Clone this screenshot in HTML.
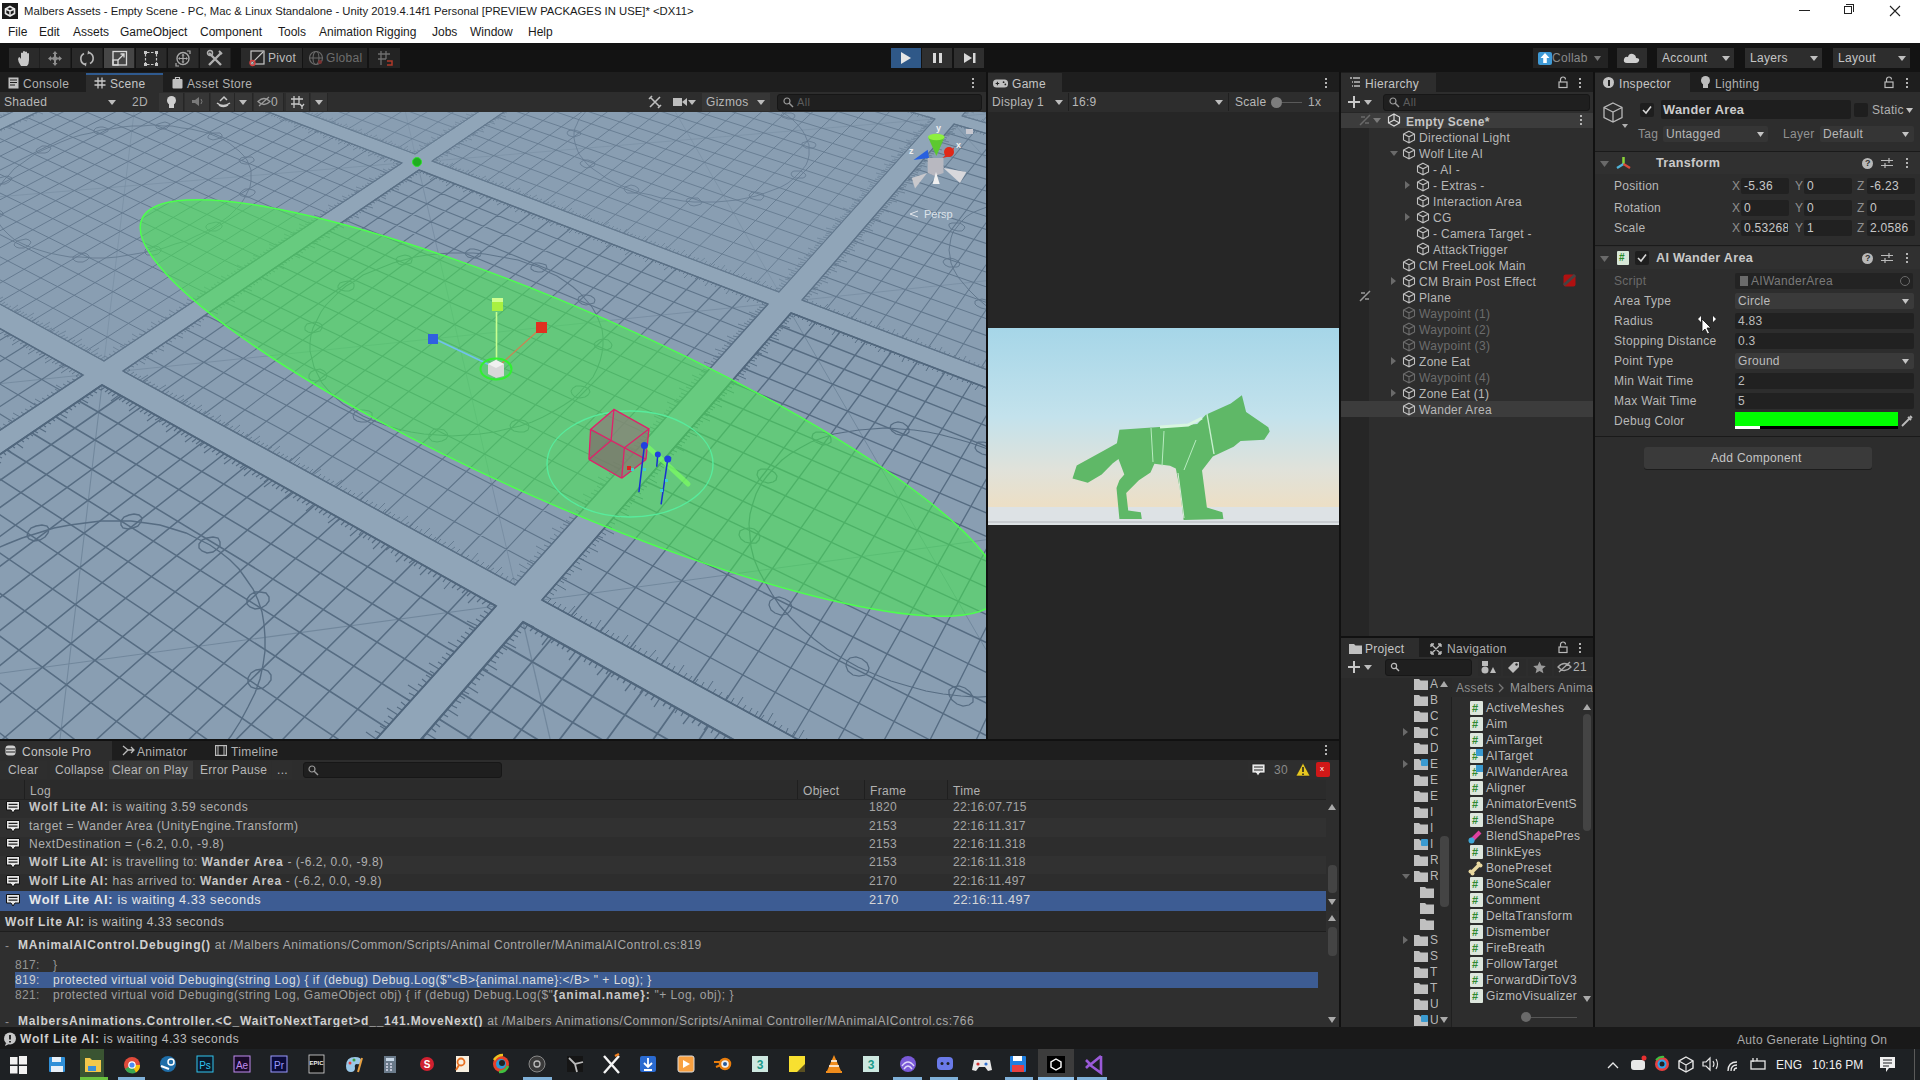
<!DOCTYPE html>
<html><head><meta charset="utf-8"><style>*{margin:0;padding:0;box-sizing:border-box}
html,body{width:1920px;height:1080px;overflow:hidden;background:#191919;font-family:"Liberation Sans",sans-serif;font-size:12px;color:#c4c4c4;position:relative}
.a{position:absolute}
.t{position:absolute;white-space:nowrap;line-height:1;letter-spacing:0.3px}
b{font-weight:bold}
svg.a{overflow:visible}</style></head><body>
<div class="a" style="left:0px;top:0px;width:1920px;height:43px;background:#ffffff;"></div><div class="a" style="left:2px;top:3px;width:16px;height:16px;background:#1a1a1a"></div><svg class="a" style="left:2px;top:3px" width="16" height="16" viewBox="0 0 16 16"><path d="M8 3.5 L12.5 6 L12.5 10.5 L8 13 L3.5 10.5 L3.5 6Z" fill="none" stroke="#e8e8e8" stroke-width="1.6"/><path d="M8 8 L8 13 M8 8 L12.5 6 M8 8 L3.5 6" stroke="#e8e8e8" stroke-width="1.4"/></svg><div class="t" style="left:24px;top:5.6px;font-size:11.3px;color:#1a1a1a;letter-spacing:0">Malbers Assets - Empty Scene - PC, Mac &amp; Linux Standalone - Unity 2019.4.14f1 Personal [PREVIEW PACKAGES IN USE]* &lt;DX11&gt;</div><div class="a" style="left:1799px;top:10px;width:11px;height:1px;background:#222;"></div><div class="a" style="left:1844px;top:6px;width:8px;height:8px;border:1px solid #222"></div><div class="a" style="left:1846px;top:4px;width:8px;height:8px;border-top:1px solid #222;border-right:1px solid #222"></div><svg class="a" style="left:1889px;top:5px" width="12" height="12"><path d="M1 1L11 11M11 1L1 11" stroke="#222" stroke-width="1.1"/></svg><div class="t" style="left:8px;top:26.2px;font-size:12px;color:#1a1a1a;letter-spacing:0">File</div><div class="t" style="left:39px;top:26.2px;font-size:12px;color:#1a1a1a;letter-spacing:0">Edit</div><div class="t" style="left:73px;top:26.2px;font-size:12px;color:#1a1a1a;letter-spacing:0">Assets</div><div class="t" style="left:120px;top:26.2px;font-size:12px;color:#1a1a1a;letter-spacing:0">GameObject</div><div class="t" style="left:200px;top:26.2px;font-size:12px;color:#1a1a1a;letter-spacing:0">Component</div><div class="t" style="left:278px;top:26.2px;font-size:12px;color:#1a1a1a;letter-spacing:0">Tools</div><div class="t" style="left:319px;top:26.2px;font-size:12px;color:#1a1a1a;letter-spacing:0">Animation Rigging</div><div class="t" style="left:432px;top:26.2px;font-size:12px;color:#1a1a1a;letter-spacing:0">Jobs</div><div class="t" style="left:470px;top:26.2px;font-size:12px;color:#1a1a1a;letter-spacing:0">Window</div><div class="t" style="left:528px;top:26.2px;font-size:12px;color:#1a1a1a;letter-spacing:0">Help</div><div class="a" style="left:0px;top:43px;width:1920px;height:29px;background:#131313;"></div><div class="a" style="left:9px;top:48px;width:31px;height:20px;background:#2a2a2a;border-right:1px solid #1f1f1f"></div><div class="a" style="left:40px;top:48px;width:31px;height:20px;background:#2a2a2a;border-right:1px solid #1f1f1f"></div><div class="a" style="left:72px;top:48px;width:31px;height:20px;background:#2a2a2a;border-right:1px solid #1f1f1f"></div><div class="a" style="left:104px;top:48px;width:31px;height:20px;background:#464646;border-right:1px solid #1f1f1f"></div><div class="a" style="left:136px;top:48px;width:31px;height:20px;background:#2a2a2a;border-right:1px solid #1f1f1f"></div><div class="a" style="left:168px;top:48px;width:31px;height:20px;background:#2a2a2a;border-right:1px solid #1f1f1f"></div><div class="a" style="left:200px;top:48px;width:31px;height:20px;background:#2a2a2a;border-right:1px solid #1f1f1f"></div><div class="a" style="left:241px;top:48px;width:61px;height:20px;background:#2a2a2a;"></div><div class="a" style="left:303px;top:48px;width:64px;height:20px;background:#232323;"></div><div class="a" style="left:369px;top:48px;width:31px;height:20px;background:#232323;"></div><svg class="a" style="left:17px;top:50px" width="16" height="17" viewBox="0 0 16 17"><path d="M4 16 Q1 12 1 9 L2 7 Q3 7 4 9 L4 3 Q5 2 6 3 L6 8 L6 1.5 Q7 0.5 8 1.5 L8 8 L8 2 Q9 1 10 2 L10 8 L10 3.5 Q11 2.5 12 3.5 L12 10 Q12 14 10 16Z" fill="#c8c8c8"/></svg><svg class="a" style="left:47px;top:50px" width="16" height="17" viewBox="0 0 16 17"><path d="M8 1L10.5 4H5.5ZM8 16L5.5 13H10.5ZM1 8.5L4 6V11ZM15 8.5L12 11V6Z" fill="#8e8e8e"/><path d="M8 3V14M3 8.5H13" stroke="#8e8e8e" stroke-width="2"/><circle cx="8" cy="8.5" r="2.2" fill="#8e8e8e"/></svg><svg class="a" style="left:79px;top:50px" width="16" height="17" viewBox="0 0 16 17"><path d="M6 14.5A6 6 0 0 1 5 3.5M10 2.5A6 6 0 0 1 11 13.5" stroke="#b8b8b8" stroke-width="1.6" fill="none"/><path d="M9 0.5L11.5 3L8.5 4.5ZM7 16.5L4.5 14L7.5 12.5Z" fill="#b8b8b8"/></svg><svg class="a" style="left:112px;top:50px" width="16" height="17" viewBox="0 0 16 17"><rect x="1" y="1.5" width="13.5" height="13.5" fill="none" stroke="#dadada" stroke-width="1.3"/><rect x="1" y="10" width="5" height="5" fill="none" stroke="#dadada" stroke-width="1.3"/><path d="M6 10L12 4M8.5 4H12V7.5" stroke="#dadada" stroke-width="1.3" fill="none"/></svg><svg class="a" style="left:143px;top:50px" width="16" height="17" viewBox="0 0 16 17"><path d="M4 2.5H12M4 14.5H12M2.5 4V13M13.5 4V13" stroke="#c8c8c8" stroke-width="1.2" stroke-dasharray="2.5 1.5"/><rect x="1" y="1" width="3" height="3" fill="#c8c8c8"/><rect x="12" y="1" width="3" height="3" fill="#c8c8c8"/><rect x="1" y="13" width="3" height="3" fill="#c8c8c8"/><rect x="12" y="13" width="3" height="3" fill="#c8c8c8"/></svg><svg class="a" style="left:175px;top:50px" width="16" height="17" viewBox="0 0 16 17"><circle cx="8" cy="8.5" r="6" fill="none" stroke="#a8a8a8" stroke-width="1.4"/><path d="M8 3.5L9.5 5.5H6.5ZM8 13.5L6.5 11.5H9.5ZM3 8.5L5 7V10ZM13 8.5L11 10V7Z" fill="#a8a8a8"/><path d="M8 5V12M4.5 8.5H11.5" stroke="#a8a8a8" stroke-width="1.2"/><path d="M12 1L15 1L15 4M1 13L1 16L4 16" stroke="#a8a8a8" stroke-width="1.2" fill="none"/></svg><svg class="a" style="left:207px;top:50px" width="16" height="17" viewBox="0 0 16 17"><path d="M2 15L14 3M2 3L14 15" stroke="#b0b0b0" stroke-width="2.4"/><circle cx="3" cy="3" r="2.5" fill="none" stroke="#b0b0b0" stroke-width="1.5"/><path d="M12 1L15 4" stroke="#b0b0b0" stroke-width="2"/></svg><svg class="a" style="left:249px;top:50px" width="16" height="16" viewBox="0 0 16 16"><rect x="2" y="1" width="13" height="13" fill="none" stroke="#c8c8c8" stroke-width="1.2"/><path d="M3 13L14 2" stroke="#c8c8c8" stroke-width="1.2"/><circle cx="3.5" cy="13" r="2.5" fill="none" stroke="#d84040" stroke-width="1.4"/></svg><svg class="a" style="left:308px;top:50px" width="16" height="16" viewBox="0 0 16 16"><circle cx="8" cy="8" r="6.5" fill="none" stroke="#6a6a6a" stroke-width="1.2"/><ellipse cx="8" cy="8" rx="3" ry="6.5" fill="none" stroke="#6a6a6a" stroke-width="1.1"/><path d="M1.5 8H14.5" stroke="#6a6a6a"/><circle cx="12" cy="12" r="2" fill="#7a3030"/></svg><svg class="a" style="left:377px;top:50px" width="16" height="16" viewBox="0 0 16 16"><path d="M4 1V15M9 1V9M1 4H13M1 9H9" stroke="#6e6e6e" stroke-width="1.3"/><path d="M10 11H15V15H10" stroke="#b03a2a" stroke-width="1.5" fill="none"/></svg><div class="t" style="left:268px;top:52.2px;font-size:12px;color:#bcbcbc;">Pivot</div><div class="t" style="left:326px;top:52.2px;font-size:12px;color:#6e6e6e;">Global</div><div class="a" style="left:891px;top:48px;width:30px;height:20px;background:#2f5888;"></div><div class="a" style="left:922px;top:48px;width:30px;height:20px;background:#2f2f2f;"></div><div class="a" style="left:954px;top:48px;width:30px;height:20px;background:#2f2f2f;"></div><svg class="a" style="left:900px;top:52px" width="12" height="12"><path d="M1 0L11 6L1 12Z" fill="#e6e6e6"/></svg><div class="a" style="left:933px;top:53px;width:3px;height:10px;background:#d8d8d8;"></div><div class="a" style="left:939px;top:53px;width:3px;height:10px;background:#d8d8d8;"></div><svg class="a" style="left:964px;top:52px" width="12" height="12"><path d="M0 1L8 6L0 11Z" fill="#d8d8d8"/><rect x="9" y="1" width="2.5" height="10" fill="#d8d8d8"/></svg><div class="a" style="left:1533px;top:48px;width:75px;height:20px;background:#232323;"></div><div class="t" style="left:1552px;top:52.2px;font-size:12px;color:#8a8a8a;">Collab</div><svg class="a" style="left:1594px;top:56px" width="7" height="5"><path d="M0 0L7 0L3.5 5Z" fill="#777"/></svg><svg class="a" style="left:1538px;top:50px" width="14" height="15"><rect x="0" y="2" width="14" height="13" rx="2" fill="#3f9ad6"/><path d="M7 3L11.5 8H8.8V13H5.2V8H2.5Z" fill="#fff"/></svg><div class="a" style="left:1617px;top:48px;width:30px;height:20px;background:#2d2d2d;"></div><svg class="a" style="left:1623px;top:51px" width="18" height="14"><path d="M4 12 Q0 12 1 8 Q2 5 5 6 Q6 2 10 3 Q13 4 13 7 Q17 7 16 10 Q15 12 13 12Z" fill="#d0d0d0"/></svg><div class="a" style="left:1657px;top:48px;width:77px;height:20px;background:#2d2d2d;"></div><div class="t" style="left:1662px;top:52.2px;font-size:12px;color:#c5c5c5;">Account</div><svg class="a" style="left:1722px;top:56px" width="8" height="5"><path d="M0 0L8 0L4 5Z" fill="#c0c0c0"/></svg><div class="a" style="left:1745px;top:48px;width:77px;height:20px;background:#2d2d2d;"></div><div class="t" style="left:1750px;top:52.2px;font-size:12px;color:#c5c5c5;">Layers</div><svg class="a" style="left:1810px;top:56px" width="8" height="5"><path d="M0 0L8 0L4 5Z" fill="#c0c0c0"/></svg><div class="a" style="left:1833px;top:48px;width:77px;height:20px;background:#2d2d2d;"></div><div class="t" style="left:1838px;top:52.2px;font-size:12px;color:#c5c5c5;">Layout</div><svg class="a" style="left:1898px;top:56px" width="8" height="5"><path d="M0 0L8 0L4 5Z" fill="#c0c0c0"/></svg><div class="a" style="left:0px;top:72px;width:986px;height:20px;background:#1e1e1e;"></div><div class="a" style="left:0px;top:73px;width:84px;height:19px;background:#1e1e1e;"></div><div class="t" style="left:23px;top:78.2px;font-size:12px;color:#b1b1b1;">Console</div><svg class="a" style="left:8px;top:77px" width="11" height="12"><rect x="0.5" y="0.5" width="10" height="11" fill="#c0c0c0"/><path d="M2 3h7M2 5.5h7M2 8h5" stroke="#1e1e1e" stroke-width="1.1"/></svg><div class="a" style="left:86px;top:73px;width:77px;height:19px;background:#2d2d2d;"></div><div class="a" style="left:86px;top:73px;width:77px;height:2px;background:#2f5a8f;"></div><div class="t" style="left:110px;top:78.2px;font-size:12px;color:#c5c5c5;">Scene</div><svg class="a" style="left:94px;top:77px" width="12" height="12"><path d="M4 0.5v11M8 0.5v11M0.5 4h11M0.5 8h11" stroke="#c8c8c8" stroke-width="1.3"/></svg><div class="a" style="left:165px;top:73px;width:95px;height:19px;background:#1e1e1e;"></div><div class="t" style="left:187px;top:78.2px;font-size:12px;color:#b1b1b1;">Asset Store</div><svg class="a" style="left:172px;top:76px" width="11" height="13"><path d="M3.5 3V1.5h4V3" stroke="#c0c0c0" fill="none" stroke-width="1.2"/><rect x="0.5" y="3" width="10" height="9.5" rx="1" fill="#c0c0c0"/></svg><div class="a" style="left:972px;top:78px;width:2px;height:2px;background:#b4b4b4;"></div><div class="a" style="left:972px;top:82px;width:2px;height:2px;background:#b4b4b4;"></div><div class="a" style="left:972px;top:86px;width:2px;height:2px;background:#b4b4b4;"></div><div class="a" style="left:0px;top:92px;width:986px;height:20px;background:#2d2d2d;"></div><div class="a" style="left:0px;top:93px;width:121px;height:18px;background:#2d2d2d;"></div><div class="t" style="left:4px;top:96.2px;font-size:12px;color:#b8b8b8;">Shaded</div><svg class="a" style="left:108px;top:100px" width="8" height="5"><path d="M0 0L8 0L4.0 5Z" fill="#bdbdbd"/></svg><div class="a" style="left:127px;top:93px;width:25px;height:18px;background:#2d2d2d;"></div><div class="t" style="left:132px;top:96.2px;font-size:12px;color:#afafaf;">2D</div><div class="a" style="left:159px;top:93px;width:25px;height:18px;background:#363636;border-right:1px solid #262626"></div><div class="a" style="left:185px;top:93px;width:25px;height:18px;background:#363636;border-right:1px solid #262626"></div><div class="a" style="left:211px;top:93px;width:24px;height:18px;background:#363636;border-right:1px solid #262626"></div><div class="a" style="left:235px;top:93px;width:18px;height:18px;background:#363636;border-right:1px solid #262626"></div><div class="a" style="left:254px;top:93px;width:30px;height:18px;background:#363636;border-right:1px solid #262626"></div><div class="a" style="left:286px;top:93px;width:24px;height:18px;background:#363636;border-right:1px solid #262626"></div><div class="a" style="left:311px;top:93px;width:17px;height:18px;background:#363636;border-right:1px solid #262626"></div><svg class="a" style="left:239px;top:100px" width="8" height="5"><path d="M0 0L8 0L4.0 5Z" fill="#bdbdbd"/></svg><svg class="a" style="left:315px;top:100px" width="8" height="5"><path d="M0 0L8 0L4.0 5Z" fill="#bdbdbd"/></svg><div class="t" style="left:271px;top:96.2px;font-size:12px;color:#afafaf;">0</div><div class="a" style="left:167px;top:96px;width:9px;height:9px;border-radius:50%;background:#cfcfcf"></div><div class="a" style="left:169px;top:104px;width:5px;height:4px;background:#cfcfcf"></div><svg class="a" style="left:191px;top:96px" width="14" height="11"><path d="M1 4h3l4-3v9l-4-3H1z" fill="#7a7a7a"/><path d="M10 3q2 2.5 0 5" stroke="#7a7a7a" fill="none"/></svg><svg class="a" style="left:216px;top:95px" width="15" height="13"><path d="M1 8q6 5 13 0M3 10q5 3 9 0M4 6l4-4 3 3" stroke="#c8c8c8" stroke-width="1.5" fill="none"/></svg><svg class="a" style="left:257px;top:96px" width="14" height="11"><path d="M1 5.5q6-6 12 0q-6 6-12 0zM2 10l10-9" stroke="#9a9a9a" stroke-width="1.3" fill="none"/></svg><svg class="a" style="left:290px;top:95px" width="14" height="14"><path d="M4 1v12M9 1v9M1 4h12M1 9h8M10 9l2 2.5 2-2.5M12 11.5v2.5" stroke="#c8c8c8" stroke-width="1.3" fill="none"/></svg><div class="a" style="left:645px;top:93px;width:22px;height:18px;background:#2d2d2d;"></div><div class="a" style="left:669px;top:93px;width:30px;height:18px;background:#2d2d2d;"></div><div class="a" style="left:702px;top:93px;width:68px;height:18px;background:#363636;"></div><svg class="a" style="left:648px;top:95px" width="14" height="14"><path d="M2 2l10 10M12 2L2 12M1 4l3-3M10 13l3-3" stroke="#bdbdbd" stroke-width="1.6" fill="none"/></svg><svg class="a" style="left:673px;top:97px" width="14" height="10"><rect x="0" y="1" width="9" height="8" fill="#bdbdbd"/><path d="M9 5l5-4v8z" fill="#bdbdbd"/></svg><svg class="a" style="left:688px;top:100px" width="8" height="5"><path d="M0 0L8 0L4.0 5Z" fill="#bdbdbd"/></svg><div class="t" style="left:706px;top:96.2px;font-size:12px;color:#b8b8b8;">Gizmos</div><svg class="a" style="left:757px;top:100px" width="8" height="5"><path d="M0 0L8 0L4.0 5Z" fill="#bdbdbd"/></svg><div class="a" style="left:777px;top:94px;width:205px;height:17px;background:#1f1f1f;border-radius:3px;border:1px solid #161616"></div><svg class="a" style="left:783px;top:97px" width="12" height="11"><circle cx="4" cy="4" r="3" stroke="#9a9a9a" fill="none" stroke-width="1.2"/><path d="M6 6l4 4" stroke="#9a9a9a" stroke-width="1.4"/></svg><div class="t" style="left:797px;top:96.7px;font-size:11px;color:#5c5c5c;">All</div><div class="a" id="scene" style="left:0;top:112px;width:986px;height:627px;overflow:hidden"><svg width="986" height="627" viewBox="0 0 986 627" style="position:absolute;left:0;top:0">
<defs><filter id="bl1" x="-5%" y="-5%" width="110%" height="110%"><feGaussianBlur stdDeviation="0.45"/></filter><filter id="bl2" x="-5%" y="-5%" width="110%" height="110%"><feGaussianBlur stdDeviation="0.7"/></filter></defs>
<rect width="986" height="627" fill="#90a5b8"/>
<path d="M-78 -133L127 -54L-183 92L-385 -19ZM369 -159L611 -88L415 42L154 -56ZM140 -49L402 51L104 249L-170 99ZM-191 110L83 263L-421 598L-676 342ZM774 -183L1047 -118L942 -1L636 -90ZM627 -84L935 7L779 180L432 49ZM419 58L768 192L515 473L123 259ZM102 273L496 494L12 1032L-403 616ZM-442 642L-28 1077L-1319 2511L-1492 1356ZM1064 -114L1407 -33L1360 120L962 4ZM954 12L1357 130L1285 370L802 188ZM791 201L1279 388L1149 819L542 488ZM523 510L1138 854L835 1857L43 1063Z" fill="#899eb2"/>
<g fill="none" opacity="0.64" filter="url(#bl1)"><path d="" stroke="#71879c" stroke-width="0.60"/><path d="M15 -2L13 -3M12 -0L9 -1M9 1L4 -1M6 3L3 2M2 4L-0 3M-1 6L-3 5" stroke="#566c82" stroke-width="0.60"/><path d="M1 -102L-308 23M-192 -90L13 -1M13 -98L-297 30M25 -93L-285 36M37 -89L-273 43M49 -84L-261 49M62 -79L-248 56M74 -74L-236 63M87 -69L-223 70M100 -64L-210 77M113 -59L-196 85M127 -54L-183 92" stroke="#566c82" stroke-width="0.86"/><path d="M-78 -133L127 -54L-183 92L-385 -19Z" stroke="#50667c" stroke-width="1.03"/><path d="M-55 -7L-64 -3L-73 1L-83 4L-93 7L-104 9L-115 11L-125 13L-136 15L-147 16L-158 16L-168 17L-178 16L-188 16L-197 14L-205 13L-213 11L-220 9L-226 6L-231 3L-235 -0L-238 -4L-241 -8L-242 -12L-243 -16L-242 -20L-241 -24L-239 -29L-235 -33L-231 -38L-227 -42L-221 -46L-215 -50L-208 -54L-201 -58L-193 -62L-185 -65L-176 -68L-167 -71L-158 -74L-149 -76L-139 -78L-129 -80L-120 -81L-110 -82L-101 -83L-91 -84L-82 -84L-74 -83L-65 -83L-57 -82L-50 -81L-43 -79L-36 -77L-30 -75L-25 -73L-20 -70L-16 -67L-13 -64L-11 -61L-9 -57L-8 -53L-8 -49L-9 -45L-11 -41L-14 -36L-17 -32L-21 -28L-27 -23L-33 -19L-39 -15L-47 -11ZM-51 -5L-54 -4L-58 -3L-61 -4L-62 -5L-62 -7L-59 -9L-56 -10L-52 -10L-49 -9L-48 -8L-49 -6ZM-110 13L-114 15L-118 15L-121 14L-122 13L-121 11L-119 10L-115 8L-111 8L-108 9L-107 10L-108 12ZM-174 18L-178 19L-182 20L-185 19L-186 18L-185 16L-182 14L-178 13L-175 13L-172 13L-171 15L-171 17ZM-222 8L-226 9L-229 9L-232 9L-233 7L-232 6L-229 4L-226 3L-222 3L-219 3L-218 5L-219 6ZM-239 -14L-243 -13L-246 -13L-249 -13L-250 -15L-249 -16L-246 -18L-243 -19L-239 -19L-236 -18L-235 -17L-236 -16ZM-223 -40L-227 -39L-230 -39L-233 -40L-234 -41L-233 -42L-230 -44L-227 -45L-223 -45L-221 -44L-220 -43L-220 -42ZM-181 -63L-185 -63L-188 -62L-191 -63L-192 -64L-191 -65L-188 -67L-185 -68L-182 -68L-179 -67L-178 -66L-179 -65ZM-126 -78L-129 -77L-132 -77L-135 -78L-136 -79L-135 -80L-133 -81L-130 -82L-126 -82L-124 -82L-123 -81L-123 -80ZM-70 -82L-73 -81L-76 -81L-79 -81L-80 -82L-80 -84L-77 -85L-74 -86L-71 -86L-68 -86L-67 -85L-68 -83ZM-26 -74L-29 -73L-33 -73L-35 -73L-37 -74L-36 -76L-34 -77L-31 -78L-28 -78L-25 -77L-24 -76L-24 -75ZM-5 -55L-8 -54L-12 -54L-14 -55L-16 -56L-15 -57L-13 -58L-10 -59L-6 -60L-4 -59L-2 -58L-3 -57ZM-13 -30L-16 -29L-20 -29L-23 -29L-24 -31L-23 -32L-21 -34L-18 -35L-14 -35L-12 -34L-10 -33L-11 -32Z" stroke="#566c82" stroke-width="0.77"/></g><g fill="none" opacity="0.61" filter="url(#bl1)"><path d="M369 -159L415 42" stroke="#71879c" stroke-width="0.57"/><path d="M299 -2L304 -5M302 -1L304 -2M305 1L307 -1M307 2L310 0M310 3L313 1M313 4L318 1M316 5L319 3M319 6L321 4M322 7L324 6M325 8L327 7M328 9L333 6M330 10L333 9M481 -2L478 -3M333 11L336 10M479 -0L476 -1M336 13L339 11M477 1L474 0M339 14L342 12M474 3L471 2M342 15L347 12M472 4L466 2M345 16L348 14M470 6L467 5M348 17L351 15M468 7L465 6M351 18L354 17M465 9L462 8M354 19L357 18M463 11L460 9M357 20L362 17M461 12L455 10M360 21L362 20M458 14L455 12M363 23L365 21M456 15L453 14M366 24L368 22M454 17L451 16M369 25L372 23M451 18L448 17M372 26L377 23M449 20L443 18M375 27L378 26M447 21L444 20M378 28L381 27M444 23L441 22M381 29L384 28M442 25L439 23M384 31L387 29M440 26L437 25M387 32L392 29M437 28L431 25M390 33L393 31M435 29L432 28M393 34L396 32M432 31L429 30M396 35L399 34M430 32L427 31M400 36L402 35M428 34L424 33M403 38L408 34M425 36L419 33M406 39L408 37M423 37L420 36M409 40L411 38M420 39L417 38M412 41L415 39M418 41L415 39M415 42L418 41M415 42L412 41" stroke="#566c82" stroke-width="0.57"/><path d="M505 -119L300 -1M520 -115L315 5M535 -111L331 11M224 -90L480 -1M550 -106L348 17M211 -83L468 7M565 -102L364 23M197 -77L455 16M580 -97L381 29M183 -70L442 24M596 -93L398 36M169 -63L429 33M611 -88L415 42M154 -56L415 42" stroke="#566c82" stroke-width="0.81"/><path d="M369 -159L611 -88L415 42L154 -56Z" stroke="#50667c" stroke-width="0.97"/><path d="M471 -45L465 -42L459 -39L452 -36L444 -33L436 -31L427 -29L418 -27L409 -26L400 -25L390 -25L380 -25L371 -25L362 -26L352 -27L344 -28L335 -30L327 -32L320 -34L313 -37L307 -40L301 -43L297 -46L293 -50L290 -54L287 -58L286 -61L285 -65L285 -69L286 -73L288 -77L290 -81L293 -85L297 -88L301 -92L306 -95L312 -98L318 -101L324 -103L331 -106L339 -108L346 -110L354 -111L362 -113L371 -114L379 -114L387 -115L396 -115L404 -115L413 -114L421 -113L429 -112L436 -111L444 -109L451 -107L457 -105L463 -102L469 -100L474 -97L479 -94L482 -90L486 -87L488 -83L490 -80L491 -76L491 -72L491 -68L490 -64L487 -60L485 -56L481 -52L477 -49ZM477 -44L474 -43L471 -42L468 -43L465 -44L465 -46L466 -47L469 -48L472 -48L475 -48L477 -46L478 -45ZM432 -27L430 -26L426 -26L423 -27L421 -28L421 -29L422 -31L425 -32L428 -32L431 -32L433 -30L434 -29ZM376 -23L373 -22L370 -22L367 -22L365 -24L364 -25L366 -27L369 -28L372 -28L375 -27L377 -26L377 -25ZM325 -32L322 -31L318 -31L315 -32L314 -33L313 -34L315 -36L318 -37L321 -37L324 -37L326 -35L326 -34ZM294 -52L291 -51L288 -51L285 -51L283 -53L283 -54L285 -55L288 -56L291 -56L294 -56L296 -55L296 -53ZM292 -76L289 -75L286 -74L283 -75L282 -76L281 -77L283 -79L286 -80L289 -80L292 -79L293 -78L294 -77ZM316 -96L314 -96L310 -95L308 -96L306 -97L306 -98L307 -99L310 -100L313 -100L316 -100L317 -99L318 -98ZM359 -110L356 -109L353 -109L350 -109L349 -110L348 -112L350 -113L352 -113L355 -114L358 -113L360 -112L360 -111ZM409 -113L406 -112L403 -112L401 -113L399 -114L399 -115L400 -116L402 -117L405 -117L408 -116L410 -115L410 -114ZM455 -106L453 -105L450 -105L447 -105L445 -106L445 -107L446 -109L448 -109L451 -110L454 -109L456 -108L456 -107ZM487 -89L485 -88L482 -88L479 -88L477 -89L476 -91L478 -92L480 -93L483 -93L486 -92L488 -91L488 -90ZM496 -66L493 -65L490 -65L487 -66L485 -67L485 -68L486 -70L488 -70L491 -71L494 -70L496 -69L497 -68Z" stroke="#566c82" stroke-width="0.73"/></g><g fill="none" opacity="0.72"><path d="M140 -49L104 249M402 51L-170 99" stroke="#71879c" stroke-width="0.69"/><path d="M402 51L395 49M399 53L396 52M397 55L393 53M394 56L391 55M391 58L388 57M389 60L383 57M386 62L383 60M384 63L380 62M381 65L378 64M378 67L375 66M376 69L369 66M373 70L370 69M370 72L367 71M368 74L365 73M365 76L362 74M362 77L356 75M360 79L356 78M357 81L354 80M354 83L351 82M351 85L348 83M349 87L342 84M346 88L343 87M343 90L340 89M340 92L337 91M337 94L334 93M335 96L328 93M332 98L329 96M329 100L326 98M326 102L323 100M323 103L320 102M320 105L314 103M317 107L314 106M314 109L311 108M312 111L308 110M41 -2L43 -1M309 113L305 112M38 -0L43 2M306 115L299 112M35 1L37 2M303 117L299 116M31 3L34 4M300 119L296 118M28 4L31 5M297 121L293 120M25 6L28 7M294 123L290 122M22 7L27 9M291 125L284 122M19 9L21 10M288 127L284 126M16 10L18 11M285 129L281 128M12 12L15 13M282 131L278 130M9 13L12 14M278 133L275 132M257 -4L252 -1M6 15L11 17M275 135L269 132M260 -3L257 -2M3 16L5 18M272 137L269 136M262 -2L260 -1M-0 18L2 19M269 139L266 138M265 -1L263 0M-4 20L-1 21M266 141L263 140M268 -0L265 1M263 144L260 142M271 1L265 4M260 146L253 143M274 2L271 4M257 148L253 146M276 3L274 5M253 150L250 148M279 4L277 6M250 152L247 151M282 5L279 7M247 154L244 153M285 6L280 9M244 156L237 153M288 8L285 9M240 158L237 157M291 9L288 10M237 161L234 159M293 10L291 11M234 163L231 161M296 11L294 12M231 165L227 163M299 12L294 15M-5 189L3 185M227 167L221 164M302 13L299 15M-2 191L2 189M224 169L221 168M305 14L302 16M1 193L5 190M221 172L217 170M308 15L305 17M4 194L8 192M217 174L214 172M311 16L308 18M8 196L11 194M214 176L211 175M314 17L308 21M11 198L18 193M210 178L204 175M317 19L314 20M14 199L18 197M207 181L204 179M319 20L317 21M17 201L21 199M204 183L200 181M322 21L320 22M20 203L24 200M200 185L197 184M325 22L323 24M23 204L27 202M197 188L193 186M328 23L323 26M26 206L34 201M193 190L187 187M331 24L329 26M29 208L33 205M190 192L186 191M334 25L332 27M32 210L36 207M186 194L183 193M337 27L335 28M36 211L39 209M183 197L179 195M340 28L338 29M39 213L43 211M179 199L176 198M343 29L338 32M42 215L50 210M176 202L169 198M346 30L344 32M45 216L49 214M172 204L169 202M349 31L347 33M48 218L52 216M168 206L165 205M352 32L350 34M51 220L55 218M165 209L161 207M355 33L353 35M55 222L59 219M161 211L158 209M358 35L353 38M58 223L66 219M158 214L151 210M361 36L359 37M61 225L65 223M154 216L151 214M364 37L362 39M64 227L68 225M150 218L147 217M367 38L365 40M68 229L72 226M146 221L143 219M371 39L368 41M71 231L75 228M143 223L139 222M374 41L368 44M74 232L82 227M139 226L132 222M377 42L374 43M78 234L82 232M135 228L132 227M380 43L377 45M81 236L85 233M131 231L128 229M383 44L380 46M84 238L88 235M128 233L124 232M386 45L383 47M88 240L91 237M124 236L120 234M389 46L384 50M91 241L99 236M120 239L113 235M392 48L390 49M94 243L98 241M116 241L113 239M395 49L393 51M98 245L102 243M112 244L109 242M399 50L396 52M101 247L105 244M108 246L105 244M402 51L399 53M104 249L108 246M104 249L101 247" stroke="#566c82" stroke-width="0.69"/><path d="M140 -49L-170 99M140 -49L402 51M153 -44L-156 107M124 -42L387 61M167 -39L-142 115M109 -35L373 70M181 -33L-127 122M93 -27L358 80M196 -28L-112 130M77 -19L343 90M210 -22L-98 139M60 -11L327 101M225 -17L-82 147M43 -3L311 112M240 -11L-67 155M26 5L295 122M255 -5L-51 164M8 14L278 134M270 1L-35 173M-10 22L260 145M286 7L-19 182M-28 31L243 157M302 13L-2 191M-47 40L225 169M318 19L15 200M-66 49L206 181M334 25L32 209M-86 59L187 194M350 32L50 219M-106 69L167 207M367 38L68 229M-127 79L147 221M384 45L86 239M-148 89L126 235M402 51L104 249M-170 99L104 249" stroke="#566c82" stroke-width="0.98"/><path d="M140 -49L402 51L104 249L-170 99Z" stroke="#50667c" stroke-width="1.18"/><path d="M214 115L205 120L196 124L186 129L175 132L164 136L153 139L141 141L129 143L117 145L105 146L93 146L81 145L70 145L59 143L49 141L39 138L30 135L23 132L15 128L9 123L4 118L0 113L-3 108L-5 103L-6 97L-6 91L-5 85L-3 80L0 74L4 68L9 63L14 57L21 52L28 47L35 42L43 38L52 34L61 30L71 26L81 23L91 21L101 18L111 17L122 15L132 14L142 14L153 13L163 14L172 14L182 16L191 17L199 19L208 21L215 24L222 27L229 31L234 35L239 39L243 43L247 48L249 53L251 58L251 64L251 69L250 75L247 81L244 87L240 93L235 98L229 104L222 109ZM220 117L216 119L212 119L208 118L206 116L206 114L208 112L212 111L216 110L220 111L222 113L222 115ZM158 142L154 143L150 143L147 143L145 141L145 138L147 136L151 135L155 134L159 135L161 137L161 139ZM87 148L83 150L78 150L75 149L73 147L73 145L76 143L80 141L84 141L87 142L89 144L89 146ZM28 134L24 136L19 136L16 135L14 133L15 131L17 129L21 128L26 127L29 128L31 130L30 132ZM-0 105L-4 106L-8 107L-11 106L-13 104L-12 102L-10 100L-6 99L-2 98L1 99L3 101L3 103ZM9 70L5 72L1 72L-2 71L-4 70L-3 68L-1 66L3 65L7 64L10 65L12 66L11 68ZM48 40L45 41L41 41L38 41L36 39L37 37L39 36L42 34L46 34L49 35L51 36L50 38ZM106 20L102 22L99 22L95 21L94 20L94 18L96 16L100 15L103 15L106 16L108 17L108 19ZM167 16L164 17L161 17L157 16L156 15L156 13L158 12L161 11L165 10L168 11L170 12L169 14ZM220 26L217 27L213 28L210 27L208 26L208 24L210 22L213 21L217 21L220 21L222 23L222 25ZM252 50L249 52L245 52L241 51L240 50L239 48L241 46L245 45L248 45L252 45L254 47L254 49ZM253 83L249 85L246 85L242 84L240 83L240 81L242 79L245 77L249 77L253 78L255 79L255 81Z" stroke="#566c82" stroke-width="0.88"/></g><g fill="none" opacity="0.89"><path d="M83 263L-676 342" stroke="#71879c" stroke-width="0.87"/><path d="M83 263L76 259M79 266L76 264M75 268L72 267M71 271L67 269M67 274L63 272M63 277L56 273M58 279L55 277M54 282L51 280M50 285L47 283M46 288L42 286M42 291L35 287M37 293L34 291M33 296L30 294M29 299L25 297M24 302L21 300M20 305L13 301M16 308L12 306M11 311L8 309M7 314L3 312M2 317L-1 315M-2 216L-6 218M1 217L-3 220M5 219L-4 224M8 221L4 223M11 223L7 225M14 224L10 227M17 226L13 229M20 228L12 233M24 230L20 232M27 232L23 234M30 233L26 236M33 235L29 238M36 237L28 242M40 239L36 241M43 241L39 243M46 242L42 245M50 244L45 247M53 246L45 251M56 248L52 251M59 250L55 252M63 252L59 254M66 254L62 256M70 255L61 261M73 257L69 260M76 259L72 262M80 261L76 264M83 263L79 266" stroke="#566c82" stroke-width="0.87"/><path d="M-191 110L83 263M-214 120L60 278M-237 132L37 294M-261 143L13 310M10 222L-490 528M28 232L-474 545M46 242L-456 562M64 253L-439 580M83 263L-421 598" stroke="#566c82" stroke-width="1.25"/><path d="M-191 110L83 263L-421 598L-676 342Z" stroke="#50667c" stroke-width="1.50"/><path d="M-191 366L-205 374L-220 382L-235 389L-251 396L-268 402L-285 407L-302 411L-319 414L-335 417L-352 418L-367 418L-382 418L-397 416L-410 414L-422 410L-432 406L-442 401L-450 395L-456 388L-461 381L-465 373L-466 365L-467 356L-466 347L-463 338L-459 328L-454 319L-448 310L-440 300L-431 291L-422 282L-411 274L-400 265L-388 257L-375 250L-362 243L-349 236L-335 230L-321 225L-306 220L-292 216L-278 213L-264 210L-250 207L-236 206L-223 205L-210 205L-198 205L-186 206L-175 208L-165 210L-155 213L-146 217L-138 221L-131 226L-125 232L-120 238L-116 244L-113 251L-112 259L-111 267L-112 275L-114 284L-118 293L-123 302L-129 311L-136 320L-145 330L-154 339L-165 348L-178 357ZM-185 370L-190 372L-196 373L-200 372L-202 369L-200 365L-196 362L-191 359L-185 359L-181 360L-180 363L-181 367ZM-279 411L-285 414L-291 414L-295 413L-297 410L-295 406L-291 402L-285 400L-279 399L-275 400L-273 403L-275 407ZM-377 422L-383 425L-389 426L-393 424L-395 421L-392 417L-388 413L-382 411L-376 410L-372 412L-370 415L-372 419ZM-445 399L-451 402L-457 402L-461 401L-462 398L-459 394L-455 391L-448 388L-443 388L-439 389L-438 392L-440 396ZM-461 351L-467 353L-473 354L-476 353L-477 350L-475 346L-470 343L-465 341L-459 340L-455 341L-454 344L-456 348ZM-427 295L-432 297L-438 297L-441 296L-442 294L-440 291L-436 288L-430 285L-425 285L-422 286L-421 289L-422 292ZM-357 246L-363 248L-368 249L-371 248L-372 245L-371 242L-367 240L-362 238L-356 237L-353 238L-352 241L-354 243ZM-273 216L-278 217L-283 218L-287 217L-288 215L-286 212L-283 209L-278 208L-273 207L-270 208L-268 210L-270 213ZM-193 208L-198 210L-203 210L-206 209L-207 207L-206 204L-203 202L-198 200L-193 200L-190 201L-189 203L-190 205ZM-133 224L-137 226L-142 227L-146 226L-147 223L-146 221L-143 218L-139 216L-134 216L-130 217L-129 219L-130 222ZM-106 262L-111 264L-116 265L-120 263L-121 261L-120 258L-117 255L-112 253L-107 253L-104 254L-102 256L-103 259ZM-123 315L-128 317L-133 317L-137 316L-139 314L-138 310L-134 307L-129 305L-124 305L-120 306L-118 308L-119 312Z" stroke="#566c82" stroke-width="1.12"/></g><g fill="none" opacity="0.58" filter="url(#bl1)"><path d="M774 -183L942 -1" stroke="#71879c" stroke-width="0.54"/><path d="M942 -1L943 -3M942 -1L938 -2" stroke="#566c82" stroke-width="0.54"/><path d="M1047 -118L942 -1M636 -90L942 -1" stroke="#566c82" stroke-width="0.77"/><path d="M774 -183L1047 -118L942 -1L636 -90Z" stroke="#50667c" stroke-width="0.92"/><path d="M941 -80L938 -77L933 -74L928 -71L923 -69L917 -67L910 -65L902 -64L894 -63L886 -62L877 -61L868 -61L859 -61L850 -62L841 -63L832 -64L823 -66L814 -68L806 -70L798 -72L790 -75L783 -78L776 -81L770 -84L765 -87L761 -91L757 -94L754 -98L751 -102L749 -105L749 -109L748 -112L749 -115L750 -119L752 -122L755 -125L758 -127L762 -130L767 -132L772 -135L778 -137L784 -138L790 -140L797 -141L804 -142L812 -142L819 -143L827 -143L835 -143L844 -142L852 -141L860 -140L868 -139L876 -138L884 -136L891 -134L899 -132L906 -129L912 -126L918 -124L924 -121L929 -117L934 -114L938 -111L941 -107L944 -104L946 -100L947 -97L947 -93L947 -90L946 -86L944 -83ZM947 -78L945 -77L942 -77L939 -78L936 -79L935 -80L935 -81L937 -82L940 -82L943 -82L946 -81L947 -80ZM916 -64L914 -63L911 -63L907 -63L905 -64L903 -66L904 -67L906 -68L909 -68L912 -67L915 -66L916 -65ZM865 -60L863 -59L860 -59L857 -59L854 -60L853 -62L853 -63L855 -64L858 -64L862 -64L864 -63L866 -61ZM811 -68L809 -67L806 -67L803 -68L801 -69L799 -70L800 -71L802 -72L805 -73L808 -72L811 -71L812 -70ZM771 -86L769 -85L766 -85L762 -85L760 -86L759 -88L760 -89L762 -90L765 -90L768 -90L770 -88L771 -87ZM754 -107L752 -106L749 -106L746 -107L744 -108L743 -109L743 -110L745 -111L748 -111L751 -111L753 -110L754 -108ZM764 -126L762 -125L759 -125L756 -126L754 -127L753 -128L753 -129L755 -130L758 -130L761 -129L763 -128L764 -127ZM795 -138L793 -138L791 -137L788 -138L786 -139L785 -140L785 -141L787 -142L790 -142L793 -141L795 -140L796 -139ZM841 -141L839 -141L836 -140L833 -141L831 -142L830 -143L830 -144L832 -145L835 -145L838 -144L840 -143L841 -142ZM889 -134L887 -134L885 -134L882 -134L879 -135L878 -136L878 -137L880 -138L883 -138L886 -138L888 -137L889 -136ZM930 -119L928 -118L925 -118L922 -119L919 -120L918 -121L919 -122L920 -123L923 -123L926 -122L929 -122L930 -120ZM951 -99L950 -98L947 -98L944 -98L941 -99L940 -101L940 -102L942 -102L945 -103L948 -102L950 -101L952 -100Z" stroke="#566c82" stroke-width="0.69"/></g><g fill="none" opacity="0.68" filter="url(#bl1)"><path d="M627 -84L779 180M935 7L432 49" stroke="#71879c" stroke-width="0.64"/><path d="M432 49L437 45M935 7L927 4M435 50L438 48M933 8L930 7M439 51L441 49M932 10L928 9M442 52L444 51M930 11L927 10M445 54L448 52M929 13L925 12M448 55L453 51M928 14L920 12M452 56L454 54M926 16L923 15M455 57L457 56M925 17L921 16M458 58L461 57M924 19L920 18M461 60L464 58M922 20L918 19M465 61L469 58M921 22L913 20M468 62L470 60M919 24L916 22M471 63L474 62M918 25L914 24M475 65L477 63M917 27L913 26M478 66L480 64M915 28L911 27M481 67L486 64M914 30L906 28M485 68L487 67M912 31L908 30M488 70L490 68M911 33L907 32M491 71L494 69M909 35L906 33M495 72L497 71M908 36L904 35M498 74L503 70M906 38L899 36M501 75L504 73M905 40L901 38M505 76L507 74M903 41L900 40M508 77L511 76M902 43L898 42M512 79L514 77M901 44L897 43M515 80L520 76M899 46L891 44M518 81L521 79M898 48L894 47M522 83L524 81M896 49L892 48M525 84L528 82M895 51L891 50M529 85L531 83M893 53L889 52M532 86L537 83M891 54L884 52M536 88L538 86M890 56L886 55M539 89L542 87M888 58L885 57M543 90L545 89M887 60L883 58M546 92L549 90M885 61L881 60M550 93L555 89M884 63L876 61M553 94L556 93M882 65L878 64M557 96L559 94M881 67L877 65M561 97L563 95M879 68L875 67M564 98L566 97M877 70L874 69M568 100L572 96M876 72L868 69M571 101L574 99M874 74L870 72M575 103L577 101M873 75L869 74M579 104L581 102M871 77L867 76M582 105L584 103M869 79L866 78M586 107L590 103M868 81L860 78M590 108L592 106M866 83L862 81M593 109L595 108M865 84L861 83M597 111L599 109M863 86L859 85M601 112L603 110M861 88L857 87M604 114L609 110M860 90L852 87M608 115L610 113M858 92L854 90M612 116L614 114M856 94L852 92M615 118L618 116M855 95L851 94M619 119L621 117M853 97L849 96M623 121L627 117M851 99L843 96M627 122L629 120M850 101L846 100M630 123L633 122M848 103L844 102M634 125L636 123M846 105L842 104M638 126L640 124M844 107L840 105M642 128L646 124M843 109L835 106M646 129L648 127M841 111L837 109M506 -2L510 -1M649 131L652 129M839 113L835 111M504 -0L507 1M653 132L656 130M837 115L833 113M502 1L505 2M657 134L659 132M836 116L832 115M500 3L506 5M661 135L665 131M834 118L826 116M498 4L501 5M665 137L667 134M832 120L828 119M495 6L499 7M669 138L671 136M830 122L826 121M493 7L496 8M673 139L675 137M829 124L825 123M491 9L494 10M677 141L679 139M827 126L823 125M489 10L495 12M681 142L685 138M825 128L817 126M487 12L490 13M685 144L687 142M823 130L819 129M484 13L487 14M689 145L691 143M821 132L817 131M482 15L485 16M693 147L695 145M819 134L815 133M480 16L483 18M696 148L699 146M818 137L814 135M477 18L484 20M700 150L705 146M816 139L808 136M475 20L478 21M705 151L707 149M814 141L810 139M473 21L476 22M709 153L711 151M812 143L808 141M471 23L474 24M713 154L715 152M810 145L806 143M468 24L471 25M717 156L719 154M808 147L804 145M466 26L472 28M721 158L725 153M806 149L798 146M464 27L467 29M725 159L727 157M805 151L800 150M461 29L464 30M729 161L731 158M803 153L798 152M459 31L462 32M733 162L735 160M801 155L797 154M456 32L460 33M737 164L739 162M799 158L795 156M902 -3L899 -0M454 34L460 36M741 165L745 161M797 160L788 157M905 -2L904 -0M452 35L455 37M745 167L747 165M795 162L791 160M909 -1L908 1M449 37L452 38M749 168L752 166M793 164L789 162M913 0L911 2M447 39L450 40M754 170L756 168M791 166L787 165M916 1L915 3M444 40L448 42M758 172L760 169M789 168L785 167M920 2L917 5M442 42L448 44M762 173L766 169M787 171L779 167M924 3L922 5M440 44L443 45M766 175L768 173M785 173L781 171M927 4L926 6M437 45L440 47M770 176L772 174M783 175L779 173M931 6L930 7M435 47L438 48M775 178L777 176M781 177L777 176M935 7L933 8M432 49L435 50M779 180L781 177M779 180L775 178" stroke="#566c82" stroke-width="0.64"/><path d="M627 -84L432 49M627 -84L935 7M643 -79L450 55M617 -77L927 15M659 -74L468 62M607 -70L919 24M676 -69L487 69M597 -63L911 32M693 -64L505 76M587 -56L903 41M710 -59L524 83M577 -49L895 51M727 -54L543 91M566 -42L887 60M745 -49L563 98M555 -35L878 70M763 -44L583 106M544 -27L869 79M781 -38L603 113M532 -19L860 89M799 -33L624 121M521 -12L851 100M817 -28L645 129M509 -3L841 110M836 -22L666 137M497 5L832 121M855 -17L688 145M485 13L822 132M875 -11L710 154M472 22L811 144M894 -5L733 162M459 31L801 155M914 1L756 171M446 40L790 167M935 7L779 180M432 49L779 180" stroke="#566c82" stroke-width="0.92"/><path d="M627 -84L935 7L779 180L432 49Z" stroke="#50667c" stroke-width="1.10"/><path d="M798 62L793 67L788 71L781 75L773 78L765 81L756 84L747 86L737 88L727 89L716 90L705 90L694 90L683 89L672 87L661 86L651 83L641 81L631 77L622 74L614 70L606 66L599 61L593 57L587 52L583 47L579 42L577 37L575 31L574 26L574 21L575 16L577 12L579 7L583 3L587 -2L592 -6L597 -9L603 -13L610 -16L617 -18L625 -21L633 -23L642 -24L651 -26L660 -27L669 -27L679 -27L688 -27L698 -26L707 -25L717 -24L726 -22L735 -20L744 -18L752 -15L760 -12L768 -8L775 -4L782 -0L788 4L793 8L798 13L802 18L805 23L807 28L809 33L809 38L809 43L808 48L806 53L802 58ZM805 65L803 66L799 66L795 66L792 64L791 62L792 60L794 59L798 59L801 59L804 61L806 63ZM763 86L761 88L757 88L753 87L750 86L749 83L750 82L752 80L756 80L760 81L763 82L764 84ZM701 92L698 93L694 94L690 93L688 91L686 89L687 87L690 86L694 86L698 86L700 88L702 90ZM638 80L635 81L631 81L627 81L625 79L624 77L625 75L628 74L631 73L635 74L638 76L639 78ZM594 54L591 55L587 56L584 55L581 53L580 51L581 50L584 48L588 48L591 49L594 50L595 52ZM580 23L577 24L574 25L570 24L568 23L567 21L568 19L571 18L574 18L578 19L580 20L581 22ZM598 -4L595 -3L592 -2L588 -3L586 -4L585 -6L586 -7L589 -9L592 -9L595 -8L598 -7L599 -5ZM639 -21L637 -20L633 -20L630 -20L628 -22L627 -23L628 -25L630 -26L633 -26L637 -25L639 -24L640 -22ZM694 -25L691 -24L688 -24L685 -25L682 -26L681 -27L682 -29L685 -30L688 -30L691 -29L694 -28L695 -27ZM750 -16L747 -15L744 -14L741 -15L738 -16L737 -18L738 -19L740 -20L743 -21L747 -20L749 -19L750 -17ZM794 6L792 7L788 7L785 6L782 5L781 3L782 2L784 1L787 1L791 1L794 2L795 4ZM815 35L813 36L809 36L806 36L803 34L802 33L802 31L805 30L808 29L812 30L815 31L816 33Z" stroke="#566c82" stroke-width="0.83"/></g><g fill="none" opacity="0.83"><path d="M419 58L515 473M768 192L123 259" stroke="#71879c" stroke-width="0.80"/><path d="M419 58L414 61M419 58L425 60M123 259L131 254M768 192L759 189M422 59L420 61M416 60L419 61M126 261L130 258M766 194L762 192M425 60L423 62M414 61L417 63M130 263L134 260M764 196L759 195M428 62L426 63M411 63L414 64M133 265L137 262M762 199L757 197M432 63L429 65M409 65L412 66M137 267L141 264M760 201L755 199M435 64L430 68M406 67L412 69M140 268L148 263M757 203L749 200M438 65L436 67M403 68L407 70M144 270L148 268M755 206L751 204M442 67L439 68M401 70L404 71M147 272L151 270M753 208L749 207M445 68L442 70M398 72L401 73M151 274L155 272M751 211L747 209M448 69L446 71M396 74L399 75M155 276L158 274M749 213L744 211M451 70L446 74M393 75L399 78M158 278L166 273M747 215L738 212M455 72L452 73M390 77L394 78M162 280L166 277M744 218L740 216M458 73L456 75M388 79L391 80M165 282L169 279M742 220L738 219M461 74L459 76M385 81L388 82M169 284L173 281M740 223L736 221M465 75L462 77M382 83L386 84M173 286L177 283M738 225L733 224M468 77L463 80M380 84L386 87M176 288L184 283M736 228L727 224M471 78L469 80M377 86L380 88M180 290L184 287M733 230L729 228M475 79L472 81M374 88L377 89M184 292L188 289M731 233L727 231M478 81L476 82M372 90L375 91M187 294L191 291M729 235L724 233M482 82L479 84M369 92L372 93M191 296L195 293M727 238L722 236M485 83L480 87M366 94L373 96M195 298L202 293M724 240L715 237M488 85L486 86M363 96L367 97M199 300L202 297M722 243L718 241M492 86L489 88M360 97L364 99M202 302L206 299M720 245L715 244M495 87L493 89M358 99L361 101M206 304L210 301M717 248L713 246M499 88L496 90M355 101L358 103M210 306L214 304M715 251L711 249M502 90L497 93M352 103L359 106M214 309L221 303M713 253L704 250M506 91L503 93M349 105L353 106M217 311L221 308M710 256L706 254M509 92L507 94M346 107L350 108M221 313L225 310M708 259L703 257M513 94L510 96M344 109L347 110M225 315L229 312M705 261L701 259M516 95L514 97M341 111L344 112M229 317L233 314M703 264L699 262M520 96L515 100M338 113L344 116M233 319L240 313M701 267L692 263M523 98L521 100M335 115L338 116M237 321L240 318M698 269L694 267M527 99L524 101M332 117L335 118M241 323L244 320M696 272L691 270M530 101L528 102M329 119L332 120M244 325L248 322M693 275L689 273M534 102L531 104M326 121L330 122M248 328L252 325M691 277L686 275M537 103L532 107M323 123L330 126M252 330L260 324M688 280L679 276M541 105L538 107M320 125L324 126M256 332L260 329M686 283L681 281M544 106L542 108M317 127L321 128M260 334L264 331M683 286L679 284M548 107L546 109M314 129L318 130M264 336L268 333M681 289L676 287M552 109L549 111M311 131L315 132M268 338L272 335M678 291L674 289M555 110L550 114M308 133L315 136M272 341L280 334M676 294L667 290M559 112L556 113M305 135L309 136M276 343L280 340M673 297L669 295M562 113L560 115M302 137L306 138M280 345L284 342M671 300L666 298M566 114L564 116M299 139L303 141M284 347L288 344M668 303L664 301M570 116L567 118M296 141L300 143M289 349L292 346M666 306L661 304M573 117L569 121M293 143L300 146M293 352L300 345M663 308L654 304M577 119L575 121M290 145L293 147M297 354L300 351M660 311L656 309M581 120L578 122M287 147L290 149M301 356L305 353M658 314L653 312M584 121L582 123M284 150L287 151M305 358L309 355M655 317L650 315M588 123L586 125M281 152L284 153M309 361L313 357M652 320L648 318M592 124L587 128M278 154L284 157M313 363L321 357M650 323L640 319M596 126L593 128M274 156L278 157M318 365L321 362M647 326L642 324M599 127L597 129M271 158L275 160M322 368L325 364M644 329L640 327M603 129L601 131M268 160L271 162M326 370L330 367M641 332L637 330M607 130L605 132M265 162L268 164M330 372L334 369M639 335L634 333M611 131L606 135M262 165L268 168M334 374L342 368M636 338L627 334M614 133L612 135M258 167L262 168M339 377L342 374M633 342L629 339M618 134L616 136M255 169L258 171M343 379L347 376M630 345L626 342M622 136L620 138M252 171L255 173M347 382L351 378M628 348L623 346M626 137L624 139M249 174L252 175M352 384L355 381M625 351L620 349M630 139L625 143M245 176L252 179M356 386L363 380M622 354L613 350M634 140L631 142M242 178L245 180M360 389L364 385M619 357L614 355M637 142L635 144M239 180L242 182M365 391L368 388M616 360L611 358M641 143L639 145M235 183L239 184M369 393L373 390M613 364L609 361M645 145L643 147M232 185L235 186M374 396L377 392M610 367L606 365M649 146L645 150M229 187L235 190M378 398L385 391M607 370L598 365M653 148L651 150M225 189L229 191M382 401L386 397M605 373L600 371M657 149L655 151M222 192L225 193M387 403L391 400M602 377L597 374M661 151L659 153M218 194L222 196M391 406L395 402M599 380L594 378M665 152L663 154M215 196L218 198M396 408L400 405M596 383L591 381M669 154L664 158M211 199L218 202M400 411L408 404M593 387L583 382M673 155L671 157M208 201L211 203M405 413L409 410M590 390L585 388M677 157L675 159M204 204L208 205M410 415L413 412M587 393L582 391M681 158L679 160M201 206L204 208M414 418L418 414M584 397L579 394M685 160L683 162M197 208L201 210M419 421L422 417M580 400L576 398M689 161L684 166M194 211L201 214M423 423L430 416M577 404L568 399M693 163L691 165M190 213L194 215M428 426L432 422M574 407L569 405M697 165L695 167M187 216L190 217M433 428L436 425M571 411L566 408M701 166L699 168M183 218L186 220M437 431L441 427M568 414L563 412M705 168L703 170M179 220L183 222M442 433L446 430M565 418L560 415M709 169L705 174M176 223L183 226M447 436L454 429M562 421L552 416M713 171L711 173M172 225L176 227M451 438L455 435M558 425L554 422M717 172L715 175M168 228L172 230M456 441L460 437M555 428L550 426M722 174L719 176M165 230L168 232M461 444L464 440M552 432L547 429M726 176L724 178M161 233L164 235M466 446L469 443M549 435L544 433M730 177L726 182M157 236L164 239M471 449L478 441M545 439L536 434M734 179L732 181M154 238L157 240M475 451L479 448M542 443L537 440M738 180L736 183M150 241L153 242M480 454L484 450M539 446L534 444M742 182L740 184M146 243L149 245M485 457L489 453M535 450L530 448M747 184L745 186M142 246L146 248M490 459L494 456M532 454L527 451M751 185L747 190M138 248L145 252M495 462L502 455M529 458L519 452M755 187L753 189M135 251L138 253M500 465L503 461M525 461L520 459M759 188L757 191M131 254L134 255M505 468L508 464M522 465L517 463M764 190L762 192M127 256L130 258M510 470L513 466M518 469L513 466M768 192L766 194M123 259L126 261M515 473L518 469M515 473L510 470" stroke="#566c82" stroke-width="0.80"/><path d="M419 58L123 259M419 58L768 192M437 65L142 270M405 67L756 205M455 72L162 280M390 77L744 218M473 79L182 291M375 87L732 232M492 86L203 303M360 98L719 246M511 93L224 314M345 108L706 260M531 101L245 326M329 119L693 275M550 108L267 338M312 130L679 290M571 116L289 350M296 142L665 306M591 124L312 362M278 153L650 323M612 132L336 375M261 165L635 339M633 140L360 388M243 178L620 357M654 148L384 402M224 190L604 374M676 157L409 415M205 203L587 393M699 165L435 429M185 217L570 412M721 174L461 443M165 230L552 432M744 183L487 458M144 244L534 452M768 192L515 473M123 259L515 473" stroke="#566c82" stroke-width="1.15"/><path d="M419 58L768 192L515 473L123 259Z" stroke="#50667c" stroke-width="1.38"/><path d="M580 280L573 287L564 293L554 299L543 305L532 310L520 314L507 317L494 320L480 322L466 323L452 324L438 323L424 322L411 320L398 317L385 313L374 309L363 304L353 298L343 292L335 285L328 278L322 271L318 263L314 255L312 247L310 239L310 231L311 223L313 216L317 208L321 200L326 193L332 187L339 180L346 174L355 169L363 163L373 159L383 155L393 151L404 148L415 145L427 143L438 142L450 141L462 141L473 141L485 142L496 144L507 146L518 148L529 152L539 155L548 160L557 164L566 170L573 175L580 181L586 188L592 195L596 202L599 209L602 217L603 225L603 233L602 241L600 249L597 257L593 265L587 272ZM588 283L585 285L580 286L575 285L572 282L571 279L573 276L576 274L581 274L585 275L589 277L590 280ZM528 318L524 320L519 320L514 319L511 317L510 313L512 310L516 308L521 308L525 309L528 311L529 315ZM446 327L442 329L437 330L432 329L429 326L429 323L431 320L434 317L439 317L444 318L447 321L448 324ZM370 308L366 310L361 310L357 309L354 307L353 303L355 300L359 298L364 298L369 299L372 301L372 305ZM325 267L321 269L316 269L311 268L309 266L309 263L311 260L315 258L320 257L324 259L326 261L327 264ZM320 219L316 220L312 221L308 220L305 218L305 215L307 212L311 211L315 210L319 211L322 213L322 216ZM353 177L349 179L345 179L341 178L338 176L338 174L340 171L343 170L348 169L352 170L354 172L354 175ZM411 151L407 152L403 153L399 152L397 150L396 147L398 145L401 144L405 143L409 144L412 146L412 148ZM480 144L476 146L472 146L468 145L466 143L465 141L467 139L470 137L474 137L478 138L481 139L481 142ZM545 158L542 160L538 160L534 159L531 157L531 155L532 153L535 151L539 151L543 152L546 153L547 156ZM594 191L590 192L586 193L582 192L579 190L578 187L579 185L583 183L587 183L591 184L594 186L595 188ZM611 236L607 238L603 238L599 237L595 235L594 232L596 230L599 228L603 227L608 228L611 231L612 233Z" stroke="#566c82" stroke-width="1.03"/></g><g fill="none" opacity="1.00"><path d="M102 273L12 1032M496 494L-403 616" stroke="#71879c" stroke-width="1.07"/><path d="M102 273L93 279M102 273L108 277M496 494L486 489M105 275L101 278M97 276L101 278M492 498L487 495M109 277L105 280M93 279L97 281M489 502L484 499M112 279L108 282M89 282L93 284M485 506L480 503M116 281L112 284M85 284L89 286M481 510L476 507M119 283L111 289M81 287L88 291M478 514L467 509M123 285L119 288M77 290L80 292M474 519L469 516M126 287L122 290M73 293L76 295M470 523L465 520M130 289L126 292M69 296L72 298M466 527L461 524M133 291L129 294M64 299L68 301M462 531L457 528M137 293L129 299M60 302L67 306M459 536L448 530M141 295L137 298M56 304L59 307M455 540L450 537M144 297L140 300M52 307L55 309M451 544L446 541M148 299L144 302M47 310L51 312M447 548L442 545M152 301L148 304M43 313L46 315M443 553L438 550M155 303L147 309M39 316L46 320M439 557L429 551M159 306L155 308M34 319L38 321M435 562L430 559M163 308L159 310M30 322L33 324M431 566L426 563M166 310L162 313M25 325L29 327M427 571L422 567M170 312L166 315M21 328L24 330M423 575L418 572M174 314L166 320M16 331L23 336M419 580L408 573M177 316L174 319M12 334L15 336M415 584L409 581M181 318L177 321M7 337L11 340M411 589L405 586M185 320L181 323M3 340L6 343M406 594L401 590M189 322L185 325M-2 344L2 346M402 598L397 595M193 324L185 330M-6 347L1 351M398 603L387 596M196 327L192 330M394 608L388 604M200 329L196 332M389 612L384 609M204 331L200 334M385 617L380 614M208 333L204 336M381 622L375 619M212 335L204 341M376 627L366 620M216 337L212 340M372 632L367 628M220 340L216 343M224 342L220 345M228 344L224 347M232 346L224 352M236 348L232 352M240 351L236 354M244 353L240 356M248 355L244 358M252 357L244 364M256 360L252 363M260 362L256 365M264 364L260 367M268 367L264 370M272 369L264 375M276 371L272 374M280 373L276 377M284 376L281 379M289 378L285 381M293 381L285 387M297 383L293 386M301 385L297 389M306 388L302 391M310 390L306 393M314 392L306 399M318 395L315 398M323 397L319 401M327 400L323 403M331 402L328 406M336 405L328 411M340 407L336 410M345 409L341 413M349 412L345 415M353 414L350 418M358 417L350 424M362 419L359 423M367 422L363 426M371 424L368 428M376 427L372 431M380 430L373 437M385 432L381 436M390 435L386 438M394 437L391 441M399 440L395 444M404 442L396 450M408 445L404 449M413 448L409 451M418 450L414 454M422 453L419 457M427 456L420 463M432 458L428 462M437 461L433 465M441 464L438 468M446 466L443 470M451 469L444 477M456 472L452 476M461 475L457 478M466 477L462 481M471 480L467 484M476 483L468 491M481 486L477 490M486 489L482 492M491 491L487 495M496 494L492 498" stroke="#566c82" stroke-width="1.07"/><path d="M102 273L-403 616M102 273L496 494M121 284L-383 635M79 289L476 517M141 295L-364 655M56 305L454 540M161 307L-344 675M32 321L433 564M182 318L-323 696M7 338L410 589M203 330L-302 717M-19 355L387 616M224 342L-280 739M-45 373L362 643M246 354L-257 762M-72 392L337 671M269 367L-234 785M-100 411L310 700M292 380L-210 809M-129 430L283 731M315 393L-185 834M-159 451L254 763M339 407L-159 860M-191 472L224 796M364 420L-133 886M-223 494L192 831M389 434L-106 913M-256 516L160 868M415 449L-78 941M-291 540L125 906M441 464L-49 970M-327 564L89 946M468 479L-19 1001M-364 590L52 988M496 494L12 1032M-403 616L12 1032" stroke="#566c82" stroke-width="1.53"/><path d="M102 273L496 494L12 1032L-403 616Z" stroke="#50667c" stroke-width="1.84"/><path d="M207 651L193 664L178 676L162 688L144 698L126 707L107 716L87 722L67 728L47 731L28 734L8 735L-11 734L-29 731L-47 727L-63 722L-78 715L-92 707L-104 698L-114 687L-123 676L-130 663L-136 650L-139 637L-141 623L-141 609L-140 594L-137 580L-132 566L-126 551L-119 538L-110 524L-100 511L-90 499L-78 487L-65 476L-52 465L-38 456L-24 447L-9 439L7 432L22 426L38 421L54 416L70 413L85 411L101 409L116 409L131 409L146 411L160 413L173 417L186 421L198 427L210 433L220 440L230 448L239 457L246 467L253 477L258 488L262 500L264 512L265 525L265 539L263 553L260 567L255 581L248 595L240 610L231 624L220 638ZM216 658L210 662L204 663L198 661L195 656L195 650L198 645L204 641L210 640L216 642L219 647L219 652ZM116 723L109 727L102 728L97 726L94 721L94 714L98 709L104 705L111 704L117 706L120 710L120 717ZM-2 741L-9 745L-16 746L-22 744L-25 739L-24 733L-19 727L-13 722L-6 721L0 724L3 728L2 735ZM-96 704L-103 708L-110 710L-115 707L-118 703L-116 697L-112 691L-105 687L-98 686L-92 688L-90 693L-91 699ZM-134 629L-140 633L-147 634L-152 632L-155 627L-153 622L-148 617L-142 613L-135 612L-130 614L-128 618L-129 624ZM-112 543L-118 546L-124 547L-129 545L-131 542L-130 537L-126 532L-120 529L-113 528L-109 530L-106 534L-108 538ZM-45 470L-51 473L-57 474L-61 472L-64 469L-63 465L-59 461L-53 458L-47 457L-43 459L-40 462L-41 466ZM45 425L40 428L34 429L29 427L27 424L28 420L31 416L36 414L42 413L47 414L49 417L48 421ZM138 414L133 416L128 417L123 416L121 413L121 409L124 405L129 403L134 402L139 403L142 406L141 410ZM217 437L213 440L207 441L202 439L199 436L199 432L202 428L207 426L213 425L218 426L220 430L220 434ZM266 493L261 496L255 497L250 495L247 492L247 487L250 483L255 480L260 480L266 481L269 485L269 489ZM268 572L263 576L257 577L251 575L248 571L248 566L251 561L256 558L263 557L268 559L271 563L271 568Z" stroke="#566c82" stroke-width="1.38"/></g><g fill="none" opacity="1.00"><path d="" stroke="#71879c" stroke-width="1.26"/><path d="" stroke="#566c82" stroke-width="1.26"/><path d="" stroke="#566c82" stroke-width="1.80"/><path d="M-442 642L-28 1077L-1319 2511L-1492 1356Z" stroke="#50667c" stroke-width="2.16"/><path d="M-580 1435L-613 1466L-647 1496L-684 1524L-721 1550L-759 1574L-797 1594L-835 1612L-872 1625L-908 1635L-942 1642L-975 1644L-1005 1642L-1032 1636L-1056 1626L-1076 1612L-1093 1595L-1106 1575L-1115 1551L-1121 1525L-1122 1497L-1121 1467L-1115 1436L-1106 1403L-1095 1370L-1080 1337L-1063 1304L-1044 1270L-1022 1238L-999 1206L-975 1175L-949 1146L-922 1117L-895 1090L-866 1065L-838 1041L-809 1020L-781 999L-752 981L-723 965L-696 950L-668 937L-641 927L-615 918L-590 911L-566 906L-542 903L-520 902L-499 903L-479 906L-461 911L-444 918L-429 927L-415 938L-403 950L-393 965L-385 981L-379 1000L-375 1020L-373 1042L-374 1065L-377 1091L-382 1117L-390 1146L-401 1175L-414 1206L-430 1238L-449 1270L-470 1303L-494 1336L-520 1370L-549 1403ZM-571 1450L-584 1460L-595 1462L-602 1457L-603 1446L-598 1433L-588 1420L-576 1411L-565 1409L-558 1413L-557 1424L-561 1437ZM-789 1612L-803 1623L-816 1625L-823 1620L-823 1607L-816 1592L-804 1577L-790 1567L-778 1564L-771 1569L-771 1581L-777 1597ZM-999 1660L-1014 1671L-1027 1674L-1034 1668L-1033 1655L-1024 1639L-1011 1624L-996 1613L-983 1610L-976 1616L-977 1628L-985 1645ZM-1110 1568L-1126 1578L-1138 1581L-1144 1576L-1143 1564L-1134 1549L-1120 1534L-1105 1525L-1093 1522L-1087 1527L-1088 1539L-1097 1554ZM-1090 1385L-1104 1394L-1115 1396L-1121 1391L-1120 1381L-1112 1368L-1099 1356L-1086 1348L-1074 1346L-1069 1350L-1070 1360L-1077 1373ZM-970 1187L-982 1194L-992 1196L-998 1193L-997 1184L-991 1173L-980 1163L-968 1157L-958 1155L-952 1158L-952 1166L-959 1177ZM-804 1030L-814 1036L-824 1037L-829 1034L-829 1027L-824 1018L-815 1009L-804 1004L-795 1002L-790 1005L-789 1012L-795 1021ZM-635 936L-645 941L-653 943L-659 940L-659 933L-655 925L-647 918L-638 912L-629 911L-624 914L-623 920L-627 928ZM-492 912L-501 918L-510 919L-515 916L-516 910L-513 902L-506 895L-497 890L-489 888L-483 891L-482 897L-485 905ZM-396 960L-405 965L-413 967L-419 964L-421 957L-418 949L-411 941L-402 936L-394 934L-388 937L-386 944L-389 952ZM-366 1076L-375 1082L-384 1084L-391 1081L-393 1073L-389 1064L-382 1055L-373 1049L-364 1047L-358 1050L-356 1058L-359 1067ZM-421 1250L-432 1258L-442 1260L-449 1256L-451 1247L-447 1236L-439 1225L-428 1218L-418 1216L-411 1220L-410 1228L-413 1240Z" stroke="#566c82" stroke-width="1.62"/></g><g fill="none" opacity="0.65" filter="url(#bl1)"><path d="M1407 -33L962 4" stroke="#71879c" stroke-width="0.61"/><path d="M962 4L964 1M965 5L967 4M969 7L970 5M973 8L974 6M976 9L978 7M980 10L983 7M984 11L985 9M988 12L989 10M968 -3L972 -2M967 -2L974 1M965 -0L969 1M964 1L968 2M963 3L966 4M962 4L965 5" stroke="#566c82" stroke-width="0.61"/><path d="M1064 -114L962 4M1083 -110L982 10M982 -20L1370 88M976 -12L1367 99M969 -4L1364 109M962 4L1360 120" stroke="#566c82" stroke-width="0.87"/><path d="M1064 -114L1407 -33L1360 120L962 4Z" stroke="#50667c" stroke-width="1.04"/><path d="M1311 17L1309 21L1306 24L1302 28L1297 31L1291 33L1285 36L1277 38L1269 39L1260 40L1250 41L1240 41L1230 41L1219 40L1208 39L1197 37L1186 35L1175 33L1164 30L1154 27L1143 23L1134 20L1125 16L1116 12L1108 7L1101 3L1095 -2L1089 -6L1085 -11L1081 -15L1078 -20L1076 -24L1074 -29L1074 -33L1075 -37L1076 -41L1078 -44L1081 -47L1085 -50L1089 -53L1095 -56L1100 -58L1107 -59L1114 -61L1121 -62L1129 -63L1138 -63L1147 -63L1156 -63L1165 -63L1175 -62L1184 -60L1194 -59L1204 -57L1214 -55L1223 -52L1233 -49L1242 -46L1251 -43L1259 -39L1267 -36L1275 -32L1282 -27L1289 -23L1295 -19L1300 -14L1304 -10L1307 -5L1310 -0L1312 4L1313 8L1312 13ZM1319 19L1317 20L1314 20L1310 20L1307 18L1304 16L1304 15L1305 14L1309 13L1312 14L1316 15L1318 17ZM1292 38L1291 39L1287 39L1283 39L1280 37L1277 35L1277 34L1279 32L1282 32L1286 33L1289 34L1292 36ZM1237 43L1236 44L1232 44L1228 44L1225 42L1222 40L1222 39L1224 37L1227 37L1231 38L1235 39L1237 41ZM1171 32L1170 33L1166 33L1162 33L1159 31L1157 30L1157 28L1159 27L1162 26L1166 27L1169 28L1171 30ZM1115 9L1113 10L1110 10L1106 10L1103 9L1101 7L1101 5L1103 4L1106 4L1110 5L1113 6L1115 8ZM1084 -18L1083 -17L1079 -17L1076 -17L1073 -19L1071 -20L1071 -22L1073 -23L1076 -23L1080 -22L1083 -21L1084 -20ZM1085 -42L1083 -41L1080 -41L1076 -42L1073 -43L1072 -44L1072 -46L1073 -47L1076 -47L1080 -46L1083 -45L1085 -44ZM1113 -58L1112 -57L1109 -57L1105 -57L1102 -58L1101 -60L1101 -61L1102 -62L1105 -62L1109 -62L1112 -61L1113 -59ZM1162 -62L1161 -61L1158 -60L1154 -61L1151 -62L1149 -64L1149 -65L1151 -66L1154 -66L1157 -65L1160 -64L1162 -63ZM1220 -53L1219 -52L1216 -52L1212 -52L1209 -54L1207 -55L1207 -56L1208 -57L1211 -58L1215 -57L1218 -56L1220 -54ZM1274 -34L1273 -33L1270 -33L1266 -33L1263 -34L1261 -36L1261 -37L1262 -38L1265 -38L1269 -38L1272 -37L1274 -35ZM1311 -8L1310 -7L1307 -6L1303 -7L1299 -8L1297 -10L1297 -11L1298 -12L1301 -13L1305 -12L1309 -11L1311 -9Z" stroke="#566c82" stroke-width="0.78"/></g><g fill="none" opacity="0.77"><path d="M954 12L1285 370M1357 130L802 188" stroke="#71879c" stroke-width="0.75"/><path d="M954 12L952 15M954 12L962 15M802 188L806 184M958 14L957 15M953 14L957 15M806 190L808 188M962 15L961 16M952 16L956 17M811 192L813 189M966 16L964 17M950 17L954 18M815 193L817 191M970 17L968 18M949 19L953 20M819 195L821 193M973 18L971 21M948 20L955 22M824 196L828 192M977 19L976 21M946 22L950 23M828 198L830 196M981 20L980 22M945 23L949 24M833 200L835 197M985 21L983 23M944 25L947 26M837 201L839 199M989 22L987 24M942 26L946 28M842 203L844 201M941 28L949 30M846 205L850 200M940 30L943 31M851 207L852 204M938 31L942 32M855 208L857 206M937 33L941 34M860 210L861 208M935 34L939 36M864 212L866 209M934 36L942 38M869 213L872 209M933 38L936 39M873 215L875 213M931 39L935 40M878 217L880 214M930 41L934 42M882 219L884 216M928 43L932 44M887 220L889 218M927 44L935 47M892 222L895 217M926 46L929 47M896 224L898 221M924 48L928 49M901 226L903 223M923 49L926 50M906 227L907 225M921 51L925 52M910 229L912 227M920 53L927 55M915 231L919 226M918 54L922 55M920 233L922 230M917 56L921 57M925 234L926 232M915 58L919 59M929 236L931 234M914 59L918 61M934 238L936 236M912 61L920 64M939 240L942 235M911 63L915 64M944 242L945 239M909 65L913 66M948 243L950 241M908 66L912 67M953 245L955 243M906 68L910 69M958 247L960 245M905 70L913 72M963 249L966 244M903 72L907 73M968 251L970 248M902 73L906 75M973 253L975 250M900 75L904 76M978 255L979 252M899 77L903 78M983 256L984 254M897 79L905 81M988 258L991 253M896 80L899 82M894 82L898 84M892 84L896 85M891 86L895 87M889 88L897 90M888 90L892 91M886 91L890 93M884 93L888 95M883 95L887 96M881 97L889 100M880 99L884 100M878 101L882 102M876 103L880 104M875 105L879 106M873 106L881 109M871 108L875 110M870 110L874 112M868 112L872 114M866 114L870 116M865 116L873 119M863 118L867 120M861 120L865 121M859 122L863 123M858 124L862 125M856 126L864 129M854 128L858 130M852 130L857 132M851 132L855 134M849 134L853 136M847 136L855 139M845 138L850 140M844 140L848 142M842 142L846 144M840 144L844 146M838 147L847 150M836 149L841 150M834 151L839 152M833 153L837 154M831 155L835 157M829 157L837 160M827 159L831 161M825 161L829 163M823 164L828 165M821 166L826 167M820 168L828 171M818 170L822 172M816 172L820 174M814 175L818 176M812 177L816 178M810 179L818 182M808 181L812 183M806 184L810 185M804 186L808 188M802 188L806 190" stroke="#566c82" stroke-width="0.75"/><path d="M954 12L802 188M954 12L1357 130M975 19L826 197M947 21L1354 142M996 25L851 207M940 30L1350 153M1018 31L876 216M932 39L1347 165M1040 37L902 226M924 48L1343 177M1062 44L928 236M916 57L1339 190M1084 51L954 246M908 67L1335 203M1107 57L981 256M899 76L1331 216M890 86L1327 229M882 97L1323 243M872 107L1319 257M863 118L1314 272M854 129L1310 287M844 140L1305 303M834 152L1300 319M823 164L1295 336M813 176L1290 353M802 188L1285 370" stroke="#566c82" stroke-width="1.07"/><path d="M954 12L1357 130L1285 370L802 188Z" stroke="#50667c" stroke-width="1.28"/><path d="M1234 206L1231 212L1227 218L1222 223L1215 228L1207 232L1199 236L1189 239L1178 241L1167 243L1155 244L1142 244L1129 244L1116 243L1102 241L1089 238L1075 235L1062 231L1049 227L1036 222L1024 217L1013 211L1002 205L993 199L984 192L976 185L969 178L963 171L958 165L954 158L951 151L950 144L949 138L950 132L951 126L953 120L957 115L961 110L966 105L972 101L979 98L987 95L995 92L1004 90L1013 88L1023 87L1033 86L1044 86L1055 86L1066 87L1078 88L1089 90L1101 92L1112 95L1124 99L1135 102L1146 106L1157 111L1168 116L1178 121L1187 127L1196 133L1204 139L1212 146L1218 152L1224 159L1229 166L1232 173L1235 180L1237 187L1237 193L1236 200ZM1244 209L1242 211L1238 211L1233 211L1228 208L1226 206L1225 203L1227 202L1231 201L1236 202L1241 204L1243 207ZM1208 239L1206 241L1202 241L1197 240L1192 238L1190 235L1189 233L1192 231L1196 230L1201 231L1205 233L1208 236ZM1139 247L1136 249L1132 249L1127 248L1123 246L1120 243L1120 240L1123 239L1127 238L1132 239L1136 241L1138 244ZM1058 230L1055 232L1051 233L1046 232L1042 229L1040 227L1040 224L1043 222L1047 222L1051 223L1056 225L1058 228ZM992 195L989 197L985 197L981 196L977 194L975 192L975 189L978 188L982 187L986 188L990 190L992 193ZM959 154L957 155L953 155L949 155L945 153L943 150L944 148L946 147L950 146L954 147L958 149L960 151ZM964 117L962 119L958 119L954 118L951 117L949 114L949 112L952 111L955 111L960 111L963 113L965 115ZM1002 94L1000 96L997 96L993 95L989 94L987 91L988 90L990 88L993 88L997 89L1001 90L1003 92ZM1063 89L1061 90L1057 90L1053 89L1049 88L1047 86L1047 84L1050 83L1053 82L1057 83L1061 85L1063 87ZM1132 101L1130 102L1126 103L1122 102L1118 100L1116 98L1116 96L1118 95L1122 94L1126 95L1130 97L1132 99ZM1195 129L1193 131L1190 131L1185 131L1181 129L1179 126L1179 124L1181 123L1185 123L1189 123L1193 125L1195 127ZM1237 169L1235 170L1232 171L1227 170L1223 168L1220 165L1220 163L1222 162L1226 161L1230 162L1234 164L1237 166Z" stroke="#566c82" stroke-width="0.96"/></g><g fill="none" opacity="0.98"><path d="M791 201L1149 819M1279 388L542 488" stroke="#71879c" stroke-width="0.97"/><path d="M791 201L787 205M791 201L800 204M542 488L549 480M796 202L794 205M789 203L793 205M547 491L551 487M800 204L798 206M787 205L791 207M552 494L556 490M804 206L802 208M785 208L789 210M558 496L561 492M809 207L807 210M783 210L787 212M563 499L566 495M813 209L809 214M781 213L790 216M568 502L575 494M818 211L816 213M779 215L783 217M573 505L577 501M822 213L820 215M777 217L781 219M579 508L582 504M827 214L825 217M775 220L779 222M584 511L587 507M831 216L829 218M772 222L777 224M589 514L592 510M836 218L832 223M770 225L779 228M595 517L601 508M840 219L838 222M768 227L773 229M600 519L603 515M845 221L843 224M766 230L770 232M605 522L609 518M849 223L847 225M764 232L768 234M611 525L614 521M854 225L852 227M762 235L766 237M616 528L619 524M858 227L855 231M759 237L768 241M622 531L628 523M863 228L861 231M757 240L762 242M627 534L630 530M868 230L866 233M755 242L759 244M633 537L636 533M872 232L870 234M753 245L757 247M638 540L641 536M877 234L875 236M750 248L755 249M644 543L647 539M882 235L878 240M748 250L757 254M649 546L656 538M886 237L884 240M746 253L750 255M655 550L658 545M891 239L889 242M744 255L748 257M661 553L664 548M896 241L894 243M741 258L746 260M666 556L670 551M901 243L899 245M739 261L744 263M672 559L675 554M905 244L902 250M737 263L746 267M678 562L684 553M910 246L908 249M734 266L739 268M684 565L687 561M915 248L913 251M732 269L737 271M689 568L692 564M920 250L918 253M730 271L734 273M695 571L698 567M924 252L923 254M727 274L732 276M701 575L704 570M929 254L926 259M725 277L734 281M707 578L713 569M934 256L932 258M723 280L727 282M713 581L716 577M939 257L937 260M720 282L725 284M719 584L722 580M944 259L942 262M718 285L722 287M725 588L728 583M949 261L947 264M715 288L720 290M731 591L734 586M954 263L950 268M713 291L722 295M737 594L743 585M959 265L957 268M711 294L715 296M743 597L746 593M964 267L962 270M708 296L713 298M749 601L752 596M969 269L967 271M706 299L710 301M755 604L758 599M974 271L972 273M703 302L708 304M761 607L764 603M979 273L975 278M701 305L710 309M767 611L773 601M984 275L982 277M698 308L703 310M773 614L776 609M989 276L987 279M696 311L700 313M779 617L782 613M693 314L698 316M786 621L788 616M691 317L695 319M792 624L795 619M688 320L697 324M798 628L804 618M685 323L690 325M804 631L807 626M683 326L687 328M680 329L685 331M678 332L682 334M675 335L684 339M672 338L677 340M670 341L674 343M667 344L672 346M664 347L669 349M661 350L671 355M659 353L664 356M656 357L661 359M653 360L658 362M650 363L655 365M648 366L657 371M645 369L650 372M642 373L647 375M639 376L644 378M636 379L641 382M633 383L643 387M631 386L635 388M628 389L632 392M625 393L630 395M622 396L627 398M619 399L629 404M616 403L621 405M613 406L618 409M610 410L615 412M607 413L612 416M604 417L614 422M601 420L606 423M598 424L603 426M594 427L599 430M591 431L596 434M588 435L598 440M585 438L590 441M582 442L587 445M579 446L584 448M575 449L580 452M572 453L582 458M569 457L574 460M566 461L571 463M562 465L567 467M559 468L564 471M556 472L566 478M552 476L557 479M549 480L554 483M545 484L551 487M542 488L547 491" stroke="#566c82" stroke-width="0.97"/><path d="M791 201L542 488M791 201L1279 388M816 210L571 504M780 214L1274 407M840 220L600 520M768 227L1268 426M866 229L630 536M756 241L1262 446M892 239L661 553M743 256L1255 467M918 249L693 570M731 270L1249 488M945 260L726 588M717 286L1242 510M972 270L759 606M704 301L1235 533M1000 281L793 625M690 317L1228 557M1029 292L829 644M676 334L1221 582M1058 303L865 664M661 351L1213 608M1087 314L902 684M645 369L1205 634M1118 326L940 705M629 387L1196 662M1149 338L979 727M613 406L1188 691M596 425L1178 721M579 446L1169 752M561 466L1159 785M542 488L1149 819" stroke="#566c82" stroke-width="1.39"/><path d="M791 201L1279 388L1149 819L542 488Z" stroke="#50667c" stroke-width="1.67"/><path d="M1108 517L1103 528L1097 538L1088 547L1079 555L1068 563L1055 569L1042 575L1027 579L1012 582L995 584L978 585L961 584L943 582L926 579L908 574L891 569L874 562L858 555L842 546L827 537L814 527L801 516L790 505L780 494L772 482L765 470L759 459L754 447L751 435L750 424L749 412L750 402L753 391L756 382L761 372L767 364L774 356L782 348L790 342L800 336L811 330L822 326L834 322L846 320L859 318L872 317L886 316L900 317L914 318L928 320L942 323L957 327L971 331L985 336L999 342L1012 349L1025 357L1038 365L1049 373L1061 383L1071 393L1080 403L1089 414L1096 425L1102 436L1107 448L1111 460L1114 472L1115 483L1114 495L1112 506ZM1120 523L1117 526L1112 526L1105 525L1100 521L1097 517L1097 512L1100 509L1105 508L1111 510L1117 514L1120 518ZM1067 575L1064 578L1058 579L1052 577L1046 573L1043 568L1044 564L1047 561L1052 560L1059 561L1064 565L1067 570ZM973 590L969 593L963 594L957 592L952 588L949 583L949 578L953 575L959 574L965 576L970 580L973 585ZM868 560L865 563L859 564L853 563L848 559L846 554L847 549L850 546L856 545L862 547L867 551L869 556ZM790 499L787 502L781 503L775 501L771 498L769 493L770 489L774 486L779 485L785 487L790 490L792 495ZM759 428L756 431L750 431L745 430L741 427L739 423L740 419L744 417L749 416L754 417L758 420L760 424ZM776 368L773 370L768 371L762 369L759 367L757 363L758 359L761 357L766 357L771 358L775 361L777 364ZM831 330L828 332L823 333L818 331L814 329L812 325L813 322L816 320L821 320L826 321L830 323L831 327ZM909 320L906 323L901 323L896 322L892 319L890 316L891 313L894 311L898 310L903 311L907 314L909 317ZM995 340L992 343L987 343L982 342L977 339L975 336L976 333L978 330L983 330L988 331L993 334L995 337ZM1071 387L1068 389L1063 390L1058 389L1053 386L1050 382L1050 379L1053 376L1058 376L1063 377L1068 380L1071 383ZM1119 453L1116 455L1111 456L1105 455L1100 451L1097 447L1097 443L1099 441L1104 440L1110 441L1115 445L1118 449Z" stroke="#566c82" stroke-width="1.25"/></g><g fill="none" opacity="1.00"><path d="M523 510L835 1857" stroke="#71879c" stroke-width="1.26"/><path d="M523 510L516 518M523 510L534 515M528 512L525 517M520 514L525 517M534 515L530 519M516 518L521 521M539 518L535 522M512 522L518 525M544 521L541 525M509 526L514 529M549 524L542 533M505 530L516 536M555 527L551 531M502 535L507 538M560 530L557 534M498 539L503 542M565 533L562 537M494 543L499 546M571 536L567 540M490 548L496 551M576 539L569 548M487 552L497 558M582 542L578 547M483 556L488 559M587 545L584 550M479 561L484 564M593 548L589 553M475 565L480 568M598 551L595 556M471 570L476 573M604 555L597 563M467 574L478 581M609 558L606 562M463 579L469 582M615 561L611 565M459 583L465 587M620 564L617 568M455 588L461 591M626 567L623 571M451 593L457 596M632 570L625 579M447 597L458 604M637 573L634 578M443 602L448 605M643 577L640 581M439 607L444 610M649 580L645 584M435 611L440 615M655 583L651 588M431 616L436 620M660 586L654 595M426 621L437 628M666 590L663 594M422 626L428 629M672 593L669 597M678 596L675 601M684 599L681 604M690 603L683 612M696 606L692 611M702 609L698 614M708 613L704 618M714 616L711 621M720 620L713 629M726 623L723 628M732 626L729 631" stroke="#566c82" stroke-width="1.26"/><path d="M523 510L43 1063M523 510L1138 854M552 526L76 1096M503 533L1127 891M582 542L111 1131M482 557L1115 930M612 559L147 1167M461 581L1103 971M644 577L184 1204M439 607L1090 1014M676 595L222 1242M709 613L262 1282" stroke="#566c82" stroke-width="1.80"/><path d="M523 510L1138 854L835 1857L43 1063Z" stroke="#50667c" stroke-width="2.16"/><path d="M863 1122L853 1145L840 1167L825 1187L808 1206L789 1223L769 1237L746 1250L723 1260L698 1267L673 1271L647 1272L621 1271L595 1267L570 1260L545 1250L521 1237L498 1223L477 1206L458 1187L440 1167L424 1145L410 1122L399 1098L389 1074L382 1049L377 1024L374 1000L373 975L374 951L376 928L381 906L387 884L395 864L404 844L415 826L427 809L440 793L454 779L469 766L484 755L501 745L518 737L536 730L554 725L572 721L591 719L610 718L629 719L648 721L667 725L686 730L704 737L722 746L740 756L757 767L774 780L790 794L805 810L819 827L832 845L844 864L854 885L863 906L871 929L877 952L881 976L883 1000L883 1025L882 1050L878 1074L871 1099ZM879 1133L874 1140L865 1142L857 1138L850 1131L846 1120L848 1111L853 1105L861 1103L870 1106L877 1114L880 1124ZM785 1250L779 1258L770 1260L761 1256L754 1247L751 1235L753 1225L759 1218L767 1216L776 1219L783 1228L786 1239ZM637 1284L630 1292L621 1294L612 1290L605 1281L603 1269L606 1258L612 1251L621 1249L630 1252L637 1261L639 1273ZM491 1218L484 1225L475 1227L467 1224L461 1215L460 1204L463 1194L470 1187L479 1185L487 1189L493 1197L494 1208ZM402 1085L395 1091L387 1093L379 1089L374 1082L373 1072L377 1063L384 1057L392 1056L400 1059L404 1066L405 1076ZM388 937L382 943L374 944L367 941L362 935L362 927L365 919L371 914L379 913L386 915L390 921L391 930ZM438 817L432 821L425 823L418 820L414 815L413 808L416 801L422 797L429 795L435 798L440 803L440 810ZM529 744L524 748L517 749L510 747L506 742L505 736L507 730L512 726L519 725L525 727L530 732L531 738ZM640 726L635 730L629 731L622 729L617 724L616 718L618 712L622 708L629 707L635 709L640 714L642 720ZM752 763L748 767L741 768L734 766L729 761L727 754L728 748L733 744L739 743L746 745L751 750L754 757ZM845 853L841 858L834 859L826 857L820 851L818 844L819 837L823 832L830 831L838 833L843 839L846 846ZM895 985L891 991L883 993L875 990L868 983L865 974L866 966L871 961L879 959L887 962L893 969L896 977Z" stroke="#566c82" stroke-width="1.62"/></g>
<ellipse cx="570" cy="296" rx="468" ry="95.5" transform="rotate(23.84 570 296)" fill="rgba(70,235,80,0.55)" stroke="#4dff4d" stroke-width="1.5"/>
<g transform="translate(0,-112)">
<circle cx="417" cy="162" r="4.5" fill="#1fae1f" stroke="#30e030" stroke-width="1"/>
<path d="M437 340L496 368" stroke="#70c0f0" stroke-width="1.5"/>
<path d="M541 328L500 365" stroke="#d08050" stroke-width="1.2"/>
<path d="M496.5 312V360" stroke="#c8ff90" stroke-width="1.6"/>
<rect x="492" y="298" width="11" height="13" fill="#a8f040"/><rect x="492" y="298" width="11" height="4" fill="#d0ff90"/>
<rect x="536" y="322" width="11" height="11" fill="#e03020"/>
<rect x="428" y="334" width="10" height="10" fill="#3060e0"/>
<ellipse cx="496" cy="369" rx="15.5" ry="10.5" fill="none" stroke="#30f030" stroke-width="2"/>
<path d="M488 364L496 360L504 364V376L496 378L488 374Z" fill="#d8d8d8"/><path d="M488 364L496 368L504 364L496 360Z" fill="#f0f0f0"/>
<ellipse cx="630" cy="464" rx="83" ry="53" fill="none" stroke="#55f0a0" stroke-width="1.4" opacity="0.9"/>
<path d="M590.6 429.4L613.9 409.4L648.9 428.9L624.4 447.8Z" fill="#8a7f78" opacity="0.75"/>
<path d="M590.6 429.4L624.4 447.8L621.7 478.3L588.9 459.4Z" fill="#7d746c" opacity="0.8"/>
<path d="M624.4 447.8L648.9 428.9L646 459.4L621.7 478.3Z" fill="#857a70" opacity="0.75"/>
<path d="M613.9 409.4L590.6 429.4L624.4 447.8L648.9 428.9Z M613.9 409.4L611.1 440.5M590.6 429.4L588.9 459.4M624.4 447.8L621.7 478.3M648.9 428.9L646 459.4M611.1 440.5L588.9 459.4M611.1 440.5L646 459.4M588.9 459.4L621.7 478.3M621.7 478.3L646 459.4" fill="none" stroke="#e0206a" stroke-width="1.3"/>
<path d="M649 448Q668 465 688 484" stroke="#7cff60" stroke-width="5" opacity="0.7" fill="none" stroke-linecap="round"/>
<rect x="627" y="466" width="4" height="4" fill="#e02020"/>
<path d="M644.4 445.6L638.9 492.2M657.8 454.4L656.7 466.7M667.8 458.9L661.1 504.4" stroke="#1830d0" stroke-width="1.5"/>
<circle cx="644.4" cy="445.6" r="3.5" fill="#2040e0"/><circle cx="657.8" cy="454.4" r="3" fill="#2040e0"/><circle cx="667.8" cy="458.9" r="3.5" fill="#2040e0"/>
<rect x="631" y="468" width="3" height="3" fill="#40d0d0"/><rect x="643" y="468" width="3" height="3" fill="#40d0d0"/><rect x="665" y="479" width="3" height="3" fill="#40d0d0"/><rect x="660" y="489" width="3" height="3" fill="#40d0d0"/>
<path d="M913.5 160L927.7 149.7L929 158Z" fill="#2860e0"/>
<path d="M928 137L944.6 137L936.4 156Z" fill="#5cc830"/><ellipse cx="936.3" cy="137" rx="8.3" ry="3.2" fill="#8ef040"/>
<path d="M942.4 157.9L954.4 147L951 156Z" fill="#e02818"/><circle cx="949" cy="152" r="5" fill="#e02818"/>
<path d="M927.7 158L943.5 158L943.5 173L935 176L927.7 173Z" fill="#b8b8c0"/>
<path d="M932.6 184L939.7 184L936 172Z" fill="#f0f0f0"/>
<path d="M943.5 168L966.4 172L960 183Z" fill="#d8d8dc"/>
<path d="M927 173L911.8 178L915 188.4Z" fill="#c8c8cc"/>
<text x="936" y="131" font-family="Liberation Sans" font-size="9" font-weight="bold" fill="#f0f0f0">y</text>
<text x="956" y="148" font-family="Liberation Sans" font-size="9" font-weight="bold" fill="#f0f0f0">x</text>
<text x="909" y="154" font-family="Liberation Sans" font-size="9" font-weight="bold" fill="#f0f0f0">z</text>
<rect x="966" y="129" width="7" height="5" fill="#c8c8d0"/>
<path d="M918 211L910 214L918 217" stroke="#e0e4ea" stroke-width="1" fill="none"/>
<text x="924" y="218" font-family="Liberation Sans" font-size="11" fill="#dde3ea">Persp</text>
</g>
</svg></div><div class="a" style="left:986px;top:72px;width:2px;height:668px;background:#111111;"></div><div class="a" style="left:0px;top:739px;width:1340px;height:2px;background:#111111;"></div><div class="a" style="left:988px;top:72px;width:352px;height:20px;background:#1e1e1e;"></div><div class="a" style="left:988px;top:73px;width:74px;height:19px;background:#2d2d2d;"></div><div class="t" style="left:1012px;top:78.2px;font-size:12px;color:#c5c5c5;">Game</div><svg class="a" style="left:993px;top:79px" width="15" height="9" viewBox="0 0 17 9"><rect x="0" y="0" width="17" height="9" rx="4" fill="#bfbfbf"/><path d="M3 4.5h4M5 2.5v4" stroke="#222" stroke-width="1.2"/><circle cx="12" cy="3" r="1" fill="#222"/><circle cx="14" cy="5.5" r="1" fill="#222"/></svg><div class="a" style="left:1325px;top:78px;width:2px;height:2px;background:#b4b4b4;"></div><div class="a" style="left:1325px;top:82px;width:2px;height:2px;background:#b4b4b4;"></div><div class="a" style="left:1325px;top:86px;width:2px;height:2px;background:#b4b4b4;"></div><div class="a" style="left:988px;top:92px;width:351px;height:20px;background:#2d2d2d;"></div><div class="t" style="left:992px;top:96.2px;font-size:12px;color:#b8b8b8;">Display 1</div><svg class="a" style="left:1055px;top:100px" width="8" height="5"><path d="M0 0L8 0L4.0 5Z" fill="#bdbdbd"/></svg><div class="a" style="left:1068px;top:93px;width:1px;height:18px;background:#1f1f1f;"></div><div class="t" style="left:1072px;top:96.2px;font-size:12px;color:#b8b8b8;">16:9</div><svg class="a" style="left:1215px;top:100px" width="8" height="5"><path d="M0 0L8 0L4.0 5Z" fill="#bdbdbd"/></svg><div class="a" style="left:1228px;top:93px;width:1px;height:18px;background:#1f1f1f;"></div><div class="t" style="left:1235px;top:96.2px;font-size:12px;color:#b8b8b8;">Scale</div><div class="a" style="left:1271px;top:97px;width:11px;height:11px;border-radius:50%;background:#7d7d7d"></div><div class="a" style="left:1282px;top:102px;width:20px;height:1px;background:#5a5a5a;"></div><div class="t" style="left:1308px;top:96.2px;font-size:12px;color:#b1b1b1;">1x</div><div class="a" style="left:988px;top:112px;width:351px;height:627px;background:#262626;"></div><!--GAMEIMG--><div class="a" style="left:1339px;top:72px;width:2px;height:968px;background:#111111;"></div><svg class="a" style="left:988px;top:328px" width="351" height="197" viewBox="0 0 351 197">
<defs><linearGradient id="sky" x1="0" y1="0" x2="0" y2="1">
<stop offset="0" stop-color="#a6d6e8"/><stop offset="0.45" stop-color="#c3e2ec"/><stop offset="0.72" stop-color="#e0e2da"/><stop offset="0.9" stop-color="#ecdfc6"/><stop offset="1" stop-color="#ecdfc6"/></linearGradient></defs>
<rect width="351" height="197" fill="url(#sky)"/>
<rect y="179" width="351" height="18" fill="#dde2e5"/>
<rect y="193" width="351" height="2" fill="#c8ccd0"/>
<polygon points="84.5,150.6 88.7,137.4 117.8,121.4 128.9,115.2 131.4,101.7 175.2,98.8 209.2,95.9 217.8,86.7 242.8,75.6 253.9,67.3 258.1,83.9 280.3,99.2 281.7,103.4 276.2,111.7 252.6,113.1 245.6,118.7 224.8,128.4 214.0,142.5 218.9,179.5 234.4,184.3 235.4,191.1 195.6,192.1 191.7,160.0 187.8,140.6 182.0,137.7 166.4,135.7 162.5,144.5 150.9,152.3 138.2,164.9 140.2,182.4 152.8,184.3 153.8,191.1 131.4,191.1 128.5,160.0 131.4,152.3 136.3,146.4 130.5,130.9 124.8,135.3 113.7,146.4 99.8,154.8" fill="#5fb867"/>
<path d="M172 99 L200 97 L214 90" stroke="#d8f6e0" stroke-width="3" fill="none"/>
<path d="M219 86 L226 126" stroke="#c8f0d0" stroke-width="1.4" fill="none"/>
<path d="M163 100 L165 134 M176 103 L174 138 M208 112 L196 142" stroke="#b8ecc0" stroke-width="1" fill="none"/>
<path d="M190 145 L196 190" stroke="#d8ecd8" stroke-width="1" fill="none"/>
</svg><div class="a" style="left:1341px;top:72px;width:252px;height:20px;background:#1e1e1e;"></div><div class="a" style="left:1341px;top:73px;width:95px;height:19px;background:#2d2d2d;"></div><div class="t" style="left:1365px;top:78.2px;font-size:12px;color:#c5c5c5;">Hierarchy</div><svg class="a" style="left:1349px;top:77px" width="12" height="11"><path d="M1 1h2M4 1h7M3 5h1M5 5h6M3 9h1M5 9h6" stroke="#bdbdbd" stroke-width="1.3"/></svg><svg class="a" style="left:1558px;top:76px" width="10" height="12"><path d="M2.5 6V3.5a2.5 2.5 0 0 1 5 0" stroke="#bbb" fill="none" stroke-width="1.2"/><rect x="1" y="6" width="8" height="5.5" fill="none" stroke="#bbb" stroke-width="1.2"/></svg><div class="a" style="left:1579px;top:78px;width:2px;height:2px;background:#b4b4b4;"></div><div class="a" style="left:1579px;top:82px;width:2px;height:2px;background:#b4b4b4;"></div><div class="a" style="left:1579px;top:86px;width:2px;height:2px;background:#b4b4b4;"></div><div class="a" style="left:1341px;top:92px;width:252px;height:544px;background:#2d2d2d;"></div><div class="a" style="left:1341px;top:92px;width:252px;height:20px;background:#2d2d2d;"></div><svg class="a" style="left:1347px;top:95px" width="14" height="14"><path d="M7 1v12M1 7h12" stroke="#c8c8c8" stroke-width="2"/></svg><svg class="a" style="left:1364px;top:100px" width="8" height="5"><path d="M0 0L8 0L4.0 5Z" fill="#bdbdbd"/></svg><div class="a" style="left:1383px;top:94px;width:207px;height:17px;background:#1f1f1f;border-radius:3px;border:1px solid #171717"></div><svg class="a" style="left:1389px;top:97px" width="12" height="11"><circle cx="4" cy="4" r="3" stroke="#9a9a9a" fill="none" stroke-width="1.2"/><path d="M6 6l4 4" stroke="#9a9a9a" stroke-width="1.4"/></svg><div class="t" style="left:1403px;top:96.7px;font-size:11px;color:#5c5c5c;">All</div><div class="a" style="left:1341px;top:112px;width:28px;height:524px;background:#262626;"></div><div class="a" style="left:1341px;top:113px;width:252px;height:15px;background:#3c3c3c;"></div><svg class="a" style="left:1387px;top:113px" width="14" height="14" viewBox="0 0 14 14"><path d="M7 1L12.5 4V10L7 13L1.5 10V4Z M7 1V7L12.5 10 M7 7L1.5 10" fill="none" stroke="#d8d8d8" stroke-width="1.2"/></svg><div class="t" style="left:1406px;top:115.7px;font-size:12px;color:#c5c5c5;font-weight:bold;">Empty Scene*</div><svg class="a" style="left:1373px;top:118px" width="8" height="5"><path d="M0 0L8 0L4.0 5Z" fill="#7a7a7a"/></svg><div class="a" style="left:1580px;top:115px;width:2px;height:2px;background:#b4b4b4;"></div><div class="a" style="left:1580px;top:119px;width:2px;height:2px;background:#b4b4b4;"></div><div class="a" style="left:1580px;top:123px;width:2px;height:2px;background:#b4b4b4;"></div><svg class="a" style="left:1402px;top:130px" width="14" height="14" viewBox="0 0 14 14"><path d="M7 1.2L12.5 4V10L7 12.8L1.5 10V4Z M1.5 4L7 6.8L12.5 4 M7 6.8V12.8" fill="none" stroke="#c2c2c2" stroke-width="1.1"/></svg><div class="t" style="left:1419px;top:131.6px;font-size:12px;color:#b8b8b8;">Directional Light</div><svg class="a" style="left:1402px;top:146px" width="14" height="14" viewBox="0 0 14 14"><path d="M7 1.2L12.5 4V10L7 12.8L1.5 10V4Z M1.5 4L7 6.8L12.5 4 M7 6.8V12.8" fill="none" stroke="#c2c2c2" stroke-width="1.1"/></svg><div class="t" style="left:1419px;top:147.6px;font-size:12px;color:#b8b8b8;">Wolf Lite AI</div><svg class="a" style="left:1390px;top:151px" width="8" height="5"><path d="M0 0L8 0L4.0 5Z" fill="#6a6a6a"/></svg><svg class="a" style="left:1416px;top:162px" width="14" height="14" viewBox="0 0 14 14"><path d="M7 1.2L12.5 4V10L7 12.8L1.5 10V4Z M1.5 4L7 6.8L12.5 4 M7 6.8V12.8" fill="none" stroke="#c2c2c2" stroke-width="1.1"/></svg><div class="t" style="left:1433px;top:163.6px;font-size:12px;color:#b8b8b8;">- AI -</div><svg class="a" style="left:1416px;top:178px" width="14" height="14" viewBox="0 0 14 14"><path d="M7 1.2L12.5 4V10L7 12.8L1.5 10V4Z M1.5 4L7 6.8L12.5 4 M7 6.8V12.8" fill="none" stroke="#c2c2c2" stroke-width="1.1"/></svg><div class="t" style="left:1433px;top:179.6px;font-size:12px;color:#b8b8b8;">- Extras -</div><svg class="a" style="left:1405px;top:181px" width="5" height="8"><path d="M0 0L5 4L0 8Z" fill="#6a6a6a"/></svg><svg class="a" style="left:1416px;top:194px" width="14" height="14" viewBox="0 0 14 14"><path d="M7 1.2L12.5 4V10L7 12.8L1.5 10V4Z M1.5 4L7 6.8L12.5 4 M7 6.8V12.8" fill="none" stroke="#c2c2c2" stroke-width="1.1"/></svg><div class="t" style="left:1433px;top:195.6px;font-size:12px;color:#b8b8b8;">Interaction Area</div><svg class="a" style="left:1416px;top:210px" width="14" height="14" viewBox="0 0 14 14"><path d="M7 1.2L12.5 4V10L7 12.8L1.5 10V4Z M1.5 4L7 6.8L12.5 4 M7 6.8V12.8" fill="none" stroke="#c2c2c2" stroke-width="1.1"/></svg><div class="t" style="left:1433px;top:211.6px;font-size:12px;color:#b8b8b8;">CG</div><svg class="a" style="left:1405px;top:213px" width="5" height="8"><path d="M0 0L5 4L0 8Z" fill="#6a6a6a"/></svg><svg class="a" style="left:1416px;top:226px" width="14" height="14" viewBox="0 0 14 14"><path d="M7 1.2L12.5 4V10L7 12.8L1.5 10V4Z M1.5 4L7 6.8L12.5 4 M7 6.8V12.8" fill="none" stroke="#c2c2c2" stroke-width="1.1"/></svg><div class="t" style="left:1433px;top:227.6px;font-size:12px;color:#b8b8b8;">- Camera Target -</div><svg class="a" style="left:1416px;top:242px" width="14" height="14" viewBox="0 0 14 14"><path d="M7 1.2L12.5 4V10L7 12.8L1.5 10V4Z M1.5 4L7 6.8L12.5 4 M7 6.8V12.8" fill="none" stroke="#c2c2c2" stroke-width="1.1"/></svg><div class="t" style="left:1433px;top:243.6px;font-size:12px;color:#b8b8b8;">AttackTrigger</div><svg class="a" style="left:1402px;top:258px" width="14" height="14" viewBox="0 0 14 14"><path d="M7 1.2L12.5 4V10L7 12.8L1.5 10V4Z M1.5 4L7 6.8L12.5 4 M7 6.8V12.8" fill="none" stroke="#c2c2c2" stroke-width="1.1"/></svg><div class="t" style="left:1419px;top:259.6px;font-size:12px;color:#b8b8b8;">CM FreeLook Main</div><svg class="a" style="left:1402px;top:274px" width="14" height="14" viewBox="0 0 14 14"><path d="M7 1.2L12.5 4V10L7 12.8L1.5 10V4Z M1.5 4L7 6.8L12.5 4 M7 6.8V12.8" fill="none" stroke="#c2c2c2" stroke-width="1.1"/></svg><div class="t" style="left:1419px;top:275.6px;font-size:12px;color:#b8b8b8;">CM Brain Post Effect</div><svg class="a" style="left:1391px;top:277px" width="5" height="8"><path d="M0 0L5 4L0 8Z" fill="#6a6a6a"/></svg><svg class="a" style="left:1402px;top:290px" width="14" height="14" viewBox="0 0 14 14"><path d="M7 1.2L12.5 4V10L7 12.8L1.5 10V4Z M1.5 4L7 6.8L12.5 4 M7 6.8V12.8" fill="none" stroke="#c2c2c2" stroke-width="1.1"/></svg><div class="t" style="left:1419px;top:291.6px;font-size:12px;color:#b8b8b8;">Plane</div><svg class="a" style="left:1402px;top:306px" width="14" height="14" viewBox="0 0 14 14"><path d="M7 1.2L12.5 4V10L7 12.8L1.5 10V4Z M1.5 4L7 6.8L12.5 4 M7 6.8V12.8" fill="none" stroke="#6c6c6c" stroke-width="1.1"/></svg><div class="t" style="left:1419px;top:307.6px;font-size:12px;color:#6c6c6c;">Waypoint (1)</div><svg class="a" style="left:1402px;top:322px" width="14" height="14" viewBox="0 0 14 14"><path d="M7 1.2L12.5 4V10L7 12.8L1.5 10V4Z M1.5 4L7 6.8L12.5 4 M7 6.8V12.8" fill="none" stroke="#6c6c6c" stroke-width="1.1"/></svg><div class="t" style="left:1419px;top:323.6px;font-size:12px;color:#6c6c6c;">Waypoint (2)</div><svg class="a" style="left:1402px;top:338px" width="14" height="14" viewBox="0 0 14 14"><path d="M7 1.2L12.5 4V10L7 12.8L1.5 10V4Z M1.5 4L7 6.8L12.5 4 M7 6.8V12.8" fill="none" stroke="#6c6c6c" stroke-width="1.1"/></svg><div class="t" style="left:1419px;top:339.6px;font-size:12px;color:#6c6c6c;">Waypoint (3)</div><svg class="a" style="left:1402px;top:354px" width="14" height="14" viewBox="0 0 14 14"><path d="M7 1.2L12.5 4V10L7 12.8L1.5 10V4Z M1.5 4L7 6.8L12.5 4 M7 6.8V12.8" fill="none" stroke="#c2c2c2" stroke-width="1.1"/></svg><div class="t" style="left:1419px;top:355.6px;font-size:12px;color:#b8b8b8;">Zone Eat</div><svg class="a" style="left:1391px;top:357px" width="5" height="8"><path d="M0 0L5 4L0 8Z" fill="#6a6a6a"/></svg><svg class="a" style="left:1402px;top:370px" width="14" height="14" viewBox="0 0 14 14"><path d="M7 1.2L12.5 4V10L7 12.8L1.5 10V4Z M1.5 4L7 6.8L12.5 4 M7 6.8V12.8" fill="none" stroke="#6c6c6c" stroke-width="1.1"/></svg><div class="t" style="left:1419px;top:371.6px;font-size:12px;color:#6c6c6c;">Waypoint (4)</div><svg class="a" style="left:1402px;top:386px" width="14" height="14" viewBox="0 0 14 14"><path d="M7 1.2L12.5 4V10L7 12.8L1.5 10V4Z M1.5 4L7 6.8L12.5 4 M7 6.8V12.8" fill="none" stroke="#c2c2c2" stroke-width="1.1"/></svg><div class="t" style="left:1419px;top:387.6px;font-size:12px;color:#b8b8b8;">Zone Eat (1)</div><svg class="a" style="left:1391px;top:389px" width="5" height="8"><path d="M0 0L5 4L0 8Z" fill="#6a6a6a"/></svg><div class="a" style="left:1341px;top:401px;width:252px;height:16px;background:#3c3c3c;"></div><svg class="a" style="left:1402px;top:402px" width="14" height="14" viewBox="0 0 14 14"><path d="M7 1.2L12.5 4V10L7 12.8L1.5 10V4Z M1.5 4L7 6.8L12.5 4 M7 6.8V12.8" fill="none" stroke="#c2c2c2" stroke-width="1.1"/></svg><div class="t" style="left:1419px;top:403.6px;font-size:12px;color:#b8b8b8;">Wander Area</div><svg class="a" style="left:1563px;top:274px" width="13" height="13"><rect x="0.5" y="0.5" width="12" height="12" rx="2" fill="#b01010"/><path d="M1 11L12 1" stroke="#444" stroke-width="3"/></svg><svg class="a" style="left:1359px;top:290px" width="12" height="12"><path d="M1 11L11 1M2 3h4M6 9h4" stroke="#9a9a9a" stroke-width="1.5"/></svg><svg class="a" style="left:1359px;top:114px" width="12" height="12"><path d="M1 11L11 1M2 3h4M6 9h4" stroke="#6a6a6a" stroke-width="1.5"/></svg><div class="a" style="left:1341px;top:636px;width:252px;height:2px;background:#111111;"></div><div class="a" style="left:1595px;top:72px;width:325px;height:20px;background:#1e1e1e;"></div><div class="a" style="left:1595px;top:73px;width:95px;height:19px;background:#2d2d2d;"></div><div class="t" style="left:1619px;top:78.2px;font-size:12px;color:#c5c5c5;">Inspector</div><div class="a" style="left:1691px;top:73px;width:90px;height:19px;background:#1e1e1e;"></div><div class="t" style="left:1715px;top:78.2px;font-size:12px;color:#b1b1b1;">Lighting</div><div class="a" style="left:1603px;top:77px;width:11px;height:11px;border-radius:50%;background:#c4c4c4"></div><div class="a" style="left:1608px;top:80px;width:1.5px;height:1.5px;background:#222"></div><div class="a" style="left:1608px;top:82px;width:1.5px;height:4px;background:#222"></div><div class="a" style="left:1701px;top:76px;width:9px;height:9px;border-radius:50%;background:#bdbdbd"></div><div class="a" style="left:1703px;top:84px;width:5px;height:4px;background:#bdbdbd"></div><svg class="a" style="left:1884px;top:76px" width="10" height="12"><path d="M2.5 6V3.5a2.5 2.5 0 0 1 5 0" stroke="#bbb" fill="none" stroke-width="1.2"/><rect x="1" y="6" width="8" height="5.5" fill="none" stroke="#bbb" stroke-width="1.2"/></svg><div class="a" style="left:1906px;top:78px;width:2px;height:2px;background:#b4b4b4;"></div><div class="a" style="left:1906px;top:82px;width:2px;height:2px;background:#b4b4b4;"></div><div class="a" style="left:1906px;top:86px;width:2px;height:2px;background:#b4b4b4;"></div><div class="a" style="left:1595px;top:92px;width:325px;height:938px;background:#2d2d2d;"></div><svg class="a" style="left:1602px;top:101px" width="22" height="24" viewBox="0 0 22 24"><path d="M11 2L20 6.5V16.5L11 21L2 16.5V6.5Z M2 6.5L11 11L20 6.5 M11 11V21" fill="none" stroke="#b8b8b8" stroke-width="1.3"/></svg><svg class="a" style="left:1622px;top:124px" width="6" height="4"><path d="M0 0L6 0L3.0 4Z" fill="#b0b0b0"/></svg><div class="a" style="left:1640px;top:103px;width:14px;height:14px;background:#1e1e1e;border-radius:2px"></div><svg class="a" style="left:1642px;top:105px" width="10" height="10"><path d="M1 5L4 8L9 1.5" stroke="#d8d8d8" stroke-width="1.6" fill="none"/></svg><div class="a" style="left:1661px;top:100px;width:190px;height:19px;background:#1e1e1e;border-radius:2px"></div><div class="t" style="left:1663px;top:103.8px;font-size:12.8px;color:#cbcbcb;font-weight:bold;">Wander Area</div><div class="a" style="left:1854px;top:103px;width:14px;height:14px;background:#1e1e1e;border-radius:2px"></div><div class="t" style="left:1872px;top:104.2px;font-size:12px;color:#b1b1b1;">Static</div><svg class="a" style="left:1906px;top:108px" width="7" height="5"><path d="M0 0L7 0L3.5 5Z" fill="#c4c4c4"/></svg><div class="t" style="left:1638px;top:128.2px;font-size:12px;color:#929292;">Tag</div><div class="a" style="left:1663px;top:126px;width:105px;height:16px;background:#353535;border-radius:2px"></div><div class="t" style="left:1666px;top:128.2px;font-size:12px;color:#b8b8b8;">Untagged</div><svg class="a" style="left:1757px;top:132px" width="7" height="5"><path d="M0 0L7 0L3.5 5Z" fill="#c4c4c4"/></svg><div class="t" style="left:1783px;top:128.2px;font-size:12px;color:#929292;">Layer</div><div class="a" style="left:1820px;top:126px;width:94px;height:16px;background:#353535;border-radius:2px"></div><div class="t" style="left:1823px;top:128.2px;font-size:12px;color:#b8b8b8;">Default</div><svg class="a" style="left:1902px;top:132px" width="7" height="5"><path d="M0 0L7 0L3.5 5Z" fill="#c4c4c4"/></svg><div class="a" style="left:1595px;top:151px;width:325px;height:1px;background:#1a1a1a;"></div><div class="a" style="left:1595px;top:152px;width:325px;height:22px;background:#303030;"></div><svg class="a" style="left:1600px;top:161px" width="9" height="6"><path d="M0 0L9 0L4.5 6Z" fill="#6a6a6a"/></svg><div class="t" style="left:1656px;top:156.9px;font-size:12.6px;color:#c9c9c9;font-weight:bold;">Transform</div><div class="a" style="left:1862px;top:158px;width:11px;height:11px;border-radius:50%;background:#b8b8b8"></div><div class="t" style="left:1865px;top:158.7px;font-size:9px;color:#303030;font-weight:bold;">?</div><svg class="a" style="left:1881px;top:157px" width="12" height="12"><path d="M0 3.5h12M0 8.5h12M8 1v5M4 6v5" stroke="#bbb" stroke-width="1.2"/></svg><div class="a" style="left:1906px;top:158px;width:2px;height:2px;background:#b4b4b4;"></div><div class="a" style="left:1906px;top:162px;width:2px;height:2px;background:#b4b4b4;"></div><div class="a" style="left:1906px;top:166px;width:2px;height:2px;background:#b4b4b4;"></div><svg class="a" style="left:1615px;top:155px" width="17" height="16"><path d="M8.5 9V2" stroke="#8bd43a" stroke-width="2.5"/><path d="M8.5 9L2 13" stroke="#4fb3d8" stroke-width="2.5"/><path d="M8.5 9L15 13" stroke="#d84a3a" stroke-width="2.5"/></svg><div class="t" style="left:1614px;top:180.2px;font-size:12px;color:#b8b8b8;">Position</div><div class="t" style="left:1732px;top:180.2px;font-size:12px;color:#909090;">X</div><div class="a" style="left:1741px;top:178px;width:48px;height:16px;background:#212121;border-radius:2px;overflow:hidden"></div><div class="t" style="left:1744px;top:180.2px;width:44px;overflow:hidden;color:#c8c8c8">-5.36</div><div class="t" style="left:1795px;top:180.2px;font-size:12px;color:#909090;">Y</div><div class="a" style="left:1804px;top:178px;width:48px;height:16px;background:#212121;border-radius:2px;overflow:hidden"></div><div class="t" style="left:1807px;top:180.2px;width:44px;overflow:hidden;color:#c8c8c8">0</div><div class="t" style="left:1857px;top:180.2px;font-size:12px;color:#909090;">Z</div><div class="a" style="left:1867px;top:178px;width:48px;height:16px;background:#212121;border-radius:2px;overflow:hidden"></div><div class="t" style="left:1870px;top:180.2px;width:44px;overflow:hidden;color:#c8c8c8">-6.23</div><div class="t" style="left:1614px;top:202.2px;font-size:12px;color:#b8b8b8;">Rotation</div><div class="t" style="left:1732px;top:202.2px;font-size:12px;color:#909090;">X</div><div class="a" style="left:1741px;top:200px;width:48px;height:16px;background:#212121;border-radius:2px;overflow:hidden"></div><div class="t" style="left:1744px;top:202.2px;width:44px;overflow:hidden;color:#c8c8c8">0</div><div class="t" style="left:1795px;top:202.2px;font-size:12px;color:#909090;">Y</div><div class="a" style="left:1804px;top:200px;width:48px;height:16px;background:#212121;border-radius:2px;overflow:hidden"></div><div class="t" style="left:1807px;top:202.2px;width:44px;overflow:hidden;color:#c8c8c8">0</div><div class="t" style="left:1857px;top:202.2px;font-size:12px;color:#909090;">Z</div><div class="a" style="left:1867px;top:200px;width:48px;height:16px;background:#212121;border-radius:2px;overflow:hidden"></div><div class="t" style="left:1870px;top:202.2px;width:44px;overflow:hidden;color:#c8c8c8">0</div><div class="t" style="left:1614px;top:222.2px;font-size:12px;color:#b8b8b8;">Scale</div><div class="t" style="left:1732px;top:222.2px;font-size:12px;color:#909090;">X</div><div class="a" style="left:1741px;top:220px;width:48px;height:16px;background:#212121;border-radius:2px;overflow:hidden"></div><div class="t" style="left:1744px;top:222.2px;width:44px;overflow:hidden;color:#c8c8c8">0.53268</div><div class="t" style="left:1795px;top:222.2px;font-size:12px;color:#909090;">Y</div><div class="a" style="left:1804px;top:220px;width:48px;height:16px;background:#212121;border-radius:2px;overflow:hidden"></div><div class="t" style="left:1807px;top:222.2px;width:44px;overflow:hidden;color:#c8c8c8">1</div><div class="t" style="left:1857px;top:222.2px;font-size:12px;color:#909090;">Z</div><div class="a" style="left:1867px;top:220px;width:48px;height:16px;background:#212121;border-radius:2px;overflow:hidden"></div><div class="t" style="left:1870px;top:222.2px;width:44px;overflow:hidden;color:#c8c8c8">2.0586</div><div class="a" style="left:1595px;top:245px;width:325px;height:1px;background:#1a1a1a;"></div><div class="a" style="left:1595px;top:247px;width:325px;height:22px;background:#303030;"></div><svg class="a" style="left:1600px;top:256px" width="9" height="6"><path d="M0 0L9 0L4.5 6Z" fill="#6a6a6a"/></svg><div class="t" style="left:1656px;top:251.9px;font-size:12.6px;color:#c9c9c9;font-weight:bold;">AI Wander Area</div><div class="a" style="left:1862px;top:253px;width:11px;height:11px;border-radius:50%;background:#b8b8b8"></div><div class="t" style="left:1865px;top:253.7px;font-size:9px;color:#303030;font-weight:bold;">?</div><svg class="a" style="left:1881px;top:252px" width="12" height="12"><path d="M0 3.5h12M0 8.5h12M8 1v5M4 6v5" stroke="#bbb" stroke-width="1.2"/></svg><div class="a" style="left:1906px;top:253px;width:2px;height:2px;background:#b4b4b4;"></div><div class="a" style="left:1906px;top:257px;width:2px;height:2px;background:#b4b4b4;"></div><div class="a" style="left:1906px;top:261px;width:2px;height:2px;background:#b4b4b4;"></div><div class="a" style="left:1617px;top:251px;width:12px;height:14px;background:#d8e8d8;border-radius:1px"></div><div class="t" style="left:1619px;top:253.2px;font-size:10px;color:#2a8a2a;font-weight:bold;">#</div><div class="a" style="left:1635px;top:251px;width:14px;height:14px;background:#1e1e1e;border-radius:2px"></div><svg class="a" style="left:1637px;top:253px" width="10" height="10"><path d="M1 5L4 8L9 1.5" stroke="#d8d8d8" stroke-width="1.6" fill="none"/></svg><div class="t" style="left:1614px;top:275.2px;font-size:12px;color:#6a6a6a;">Script</div><div class="a" style="left:1735px;top:273px;width:178px;height:16px;background:#232323;border-radius:2px"></div><div class="a" style="left:1740px;top:276px;width:8px;height:10px;background:#6a6a6a;"></div><div class="t" style="left:1751px;top:275.2px;font-size:12px;color:#7a7a7a;">AIWanderArea</div><div class="a" style="left:1900px;top:276px;width:10px;height:10px;border-radius:50%;border:1.5px solid #6a6a6a"></div><div class="t" style="left:1614px;top:295.2px;font-size:12px;color:#b8b8b8;">Area Type</div><div class="a" style="left:1735px;top:293px;width:179px;height:16px;background:#3a3a3a;border-radius:2px"></div><svg class="a" style="left:1902px;top:299px" width="7" height="5"><path d="M0 0L7 0L3.5 5Z" fill="#c4c4c4"/></svg><div class="t" style="left:1738px;top:295.2px;font-size:12px;color:#bcbcbc;">Circle</div><div class="t" style="left:1614px;top:315.2px;font-size:12px;color:#b8b8b8;">Radius</div><div class="a" style="left:1735px;top:313px;width:179px;height:16px;background:#212121;border-radius:2px"></div><div class="t" style="left:1738px;top:315.2px;font-size:12px;color:#bcbcbc;">4.83</div><div class="t" style="left:1614px;top:335.2px;font-size:12px;color:#b8b8b8;">Stopping Distance</div><div class="a" style="left:1735px;top:333px;width:179px;height:16px;background:#212121;border-radius:2px"></div><div class="t" style="left:1738px;top:335.2px;font-size:12px;color:#bcbcbc;">0.3</div><div class="t" style="left:1614px;top:355.2px;font-size:12px;color:#b8b8b8;">Point Type</div><div class="a" style="left:1735px;top:353px;width:179px;height:16px;background:#3a3a3a;border-radius:2px"></div><svg class="a" style="left:1902px;top:359px" width="7" height="5"><path d="M0 0L7 0L3.5 5Z" fill="#c4c4c4"/></svg><div class="t" style="left:1738px;top:355.2px;font-size:12px;color:#bcbcbc;">Ground</div><div class="t" style="left:1614px;top:375.2px;font-size:12px;color:#b8b8b8;">Min Wait Time</div><div class="a" style="left:1735px;top:373px;width:179px;height:16px;background:#212121;border-radius:2px"></div><div class="t" style="left:1738px;top:375.2px;font-size:12px;color:#bcbcbc;">2</div><div class="t" style="left:1614px;top:395.2px;font-size:12px;color:#b8b8b8;">Max Wait Time</div><div class="a" style="left:1735px;top:393px;width:179px;height:16px;background:#212121;border-radius:2px"></div><div class="t" style="left:1738px;top:395.2px;font-size:12px;color:#bcbcbc;">5</div><div class="t" style="left:1614px;top:415.2px;font-size:12px;color:#b8b8b8;">Debug Color</div><div class="a" style="left:1735px;top:412px;width:163px;height:14px;background:#00ff00;"></div><div class="a" style="left:1735px;top:426px;width:163px;height:3px;background:#000000;"></div><div class="a" style="left:1735px;top:426px;width:25px;height:3px;background:#ffffff;"></div><svg class="a" style="left:1900px;top:414px" width="14" height="14"><path d="M2 12L9 5M8 3l3 3M10 2l2 2" stroke="#bbb" stroke-width="1.8"/></svg><svg class="a" style="left:1697px;top:314px" width="20" height="22"><path d="M1 5L4 2V8Z M19 5L16 2V8Z" fill="#fff"/><path d="M5 5L5 18L8 15L10.5 20L12.5 19L10 14L14 14Z" fill="#fff" stroke="#111" stroke-width="0.8"/></svg><div class="a" style="left:1595px;top:436px;width:325px;height:1px;background:#1a1a1a;"></div><div class="a" style="left:1644px;top:447px;width:228px;height:22px;background:#3a3a3a;border-radius:3px;box-shadow:0 1px 0 #1c1c1c"></div><div class="t" style="left:1711px;top:452.2px;font-size:12px;color:#c5c5c5;">Add Component</div><div class="a" style="left:1593px;top:72px;width:2px;height:958px;background:#111111;"></div><div class="a" style="left:1341px;top:638px;width:252px;height:19px;background:#1e1e1e;"></div><div class="a" style="left:1341px;top:638px;width:78px;height:19px;background:#2d2d2d;"></div><div class="t" style="left:1365px;top:643.2px;font-size:12px;color:#c5c5c5;">Project</div><div class="a" style="left:1420px;top:638px;width:92px;height:19px;background:#1e1e1e;"></div><div class="t" style="left:1447px;top:643.2px;font-size:12px;color:#b1b1b1;">Navigation</div><svg class="a" style="left:1349px;top:643px" width="13" height="11"><path d="M0 1h5l1.5 1.5H13V11H0Z" fill="#c0c0c0"/></svg><svg class="a" style="left:1430px;top:643px" width="12" height="12"><path d="M1 1l10 10M11 1L1 11M1 1h3M1 1v3M11 11h-3M11 11v-3M11 1h-3M11 1v3M1 11h3M1 11v-3" stroke="#bbb" stroke-width="1.4"/></svg><svg class="a" style="left:1558px;top:641px" width="10" height="12"><path d="M2.5 6V3.5a2.5 2.5 0 0 1 5 0" stroke="#bbb" fill="none" stroke-width="1.2"/><rect x="1" y="6" width="8" height="5.5" fill="none" stroke="#bbb" stroke-width="1.2"/></svg><div class="a" style="left:1579px;top:643px;width:2px;height:2px;background:#b4b4b4;"></div><div class="a" style="left:1579px;top:647px;width:2px;height:2px;background:#b4b4b4;"></div><div class="a" style="left:1579px;top:651px;width:2px;height:2px;background:#b4b4b4;"></div><div class="a" style="left:1341px;top:657px;width:252px;height:21px;background:#2d2d2d;"></div><svg class="a" style="left:1347px;top:660px" width="14" height="14"><path d="M7 1v12M1 7h12" stroke="#c8c8c8" stroke-width="2"/></svg><svg class="a" style="left:1364px;top:665px" width="8" height="5"><path d="M0 0L8 0L4.0 5Z" fill="#bdbdbd"/></svg><div class="a" style="left:1385px;top:659px;width:87px;height:17px;background:#1f1f1f;border-radius:3px;border:1px solid #171717"></div><svg class="a" style="left:1390px;top:662px" width="10" height="10"><circle cx="4" cy="4" r="2.6" stroke="#bbb" fill="none" stroke-width="1.2"/><path d="M6 6l3 3" stroke="#bbb" stroke-width="1.4"/></svg><div class="a" style="left:1478px;top:659px;width:23px;height:17px;background:#2b2b2b;"></div><div class="a" style="left:1503px;top:659px;width:23px;height:17px;background:#2b2b2b;"></div><div class="a" style="left:1528px;top:659px;width:24px;height:17px;background:#2b2b2b;"></div><div class="a" style="left:1554px;top:659px;width:38px;height:17px;background:#2b2b2b;"></div><svg class="a" style="left:1481px;top:661px" width="15" height="13"><rect x="1" y="0" width="6" height="5" fill="#bbb"/><circle cx="4" cy="9" r="3.5" fill="#bbb"/><path d="M9 12l3-6 3 6z" fill="#bbb"/></svg><svg class="a" style="left:1507px;top:661px" width="13" height="13"><path d="M1 7L7 1H12V6L6 12Z" fill="#bbb"/><circle cx="9.5" cy="3.5" r="1.2" fill="#2b2b2b"/></svg><svg class="a" style="left:1533px;top:661px" width="13" height="13"><path d="M6.5 0.5L8.3 4.6L12.8 5L9.4 7.9L10.4 12.3L6.5 10L2.6 12.3L3.6 7.9L0.2 5L4.7 4.6Z" fill="#9a9a9a"/></svg><svg class="a" style="left:1557px;top:661px" width="15" height="12"><path d="M1 6q6.5-7 13 0q-6.5 7-13 0zM2 11L13 1" stroke="#aaa" stroke-width="1.3" fill="none"/></svg><div class="t" style="left:1573px;top:661.2px;font-size:12px;color:#b1b1b1;">21</div><div class="a" style="left:1341px;top:678px;width:252px;height:352px;background:#2d2d2d;"></div><div class="a" style="left:1341px;top:678px;width:111px;height:352px;background:#2a2a2a;"></div><div class="a" style="left:1452px;top:678px;width:141px;height:19px;background:#2b2b2b;"></div><div class="t" style="left:1456px;top:682.2px;font-size:12px;color:#909090;">Assets</div><svg class="a" style="left:1498px;top:683px" width="6" height="10"><path d="M1 1L5 5L1 9" stroke="#777" fill="none" stroke-width="1.3"/></svg><div class="a" style="left:1452px;top:678px;width:141px;height:19px;overflow:hidden"><div class="t" style="left:58px;top:4.2px;color:#9a9a9a">Malbers Animations</div></div><div class="a" style="left:1593px;top:678px;width:2px;height:352px;background:#111111;"></div><svg class="a" style="left:1414px;top:678px" width="14" height="12"><path d="M0 1h5l1.5 1.5H14V12H0Z" fill="#c0c0c0"/></svg><div class="t" style="left:1430px;top:678.2px;font-size:12px;color:#b8b8b8;">A</div><svg class="a" style="left:1414px;top:694px" width="14" height="12"><path d="M0 1h5l1.5 1.5H14V12H0Z" fill="#c0c0c0"/></svg><div class="t" style="left:1430px;top:694.2px;font-size:12px;color:#b8b8b8;">B</div><svg class="a" style="left:1414px;top:710px" width="14" height="12"><path d="M0 1h5l1.5 1.5H14V12H0Z" fill="#c0c0c0"/></svg><div class="t" style="left:1430px;top:710.2px;font-size:12px;color:#b8b8b8;">C</div><svg class="a" style="left:1414px;top:726px" width="14" height="12"><path d="M0 1h5l1.5 1.5H14V12H0Z" fill="#c0c0c0"/></svg><div class="t" style="left:1430px;top:726.2px;font-size:12px;color:#b8b8b8;">C</div><svg class="a" style="left:1414px;top:742px" width="14" height="12"><path d="M0 1h5l1.5 1.5H14V12H0Z" fill="#c0c0c0"/></svg><div class="t" style="left:1430px;top:742.2px;font-size:12px;color:#b8b8b8;">D</div><svg class="a" style="left:1414px;top:758px" width="14" height="12"><path d="M0 1h5l1.5 1.5H14V12H0Z" fill="#c0c0c0"/></svg><div class="t" style="left:1430px;top:758.2px;font-size:12px;color:#b8b8b8;">E</div><svg class="a" style="left:1414px;top:774px" width="14" height="12"><path d="M0 1h5l1.5 1.5H14V12H0Z" fill="#c0c0c0"/></svg><div class="t" style="left:1430px;top:774.2px;font-size:12px;color:#b8b8b8;">E</div><svg class="a" style="left:1414px;top:790px" width="14" height="12"><path d="M0 1h5l1.5 1.5H14V12H0Z" fill="#c0c0c0"/></svg><div class="t" style="left:1430px;top:790.2px;font-size:12px;color:#b8b8b8;">E</div><svg class="a" style="left:1414px;top:806px" width="14" height="12"><path d="M0 1h5l1.5 1.5H14V12H0Z" fill="#c0c0c0"/></svg><div class="t" style="left:1430px;top:806.2px;font-size:12px;color:#b8b8b8;">I</div><svg class="a" style="left:1414px;top:822px" width="14" height="12"><path d="M0 1h5l1.5 1.5H14V12H0Z" fill="#c0c0c0"/></svg><div class="t" style="left:1430px;top:822.2px;font-size:12px;color:#b8b8b8;">I</div><svg class="a" style="left:1414px;top:838px" width="14" height="12"><path d="M0 1h5l1.5 1.5H14V12H0Z" fill="#c0c0c0"/></svg><div class="t" style="left:1430px;top:838.2px;font-size:12px;color:#b8b8b8;">I</div><svg class="a" style="left:1414px;top:854px" width="14" height="12"><path d="M0 1h5l1.5 1.5H14V12H0Z" fill="#c0c0c0"/></svg><div class="t" style="left:1430px;top:854.2px;font-size:12px;color:#b8b8b8;">R</div><svg class="a" style="left:1414px;top:870px" width="14" height="12"><path d="M0 1h5l1.5 1.5H14V12H0Z" fill="#c0c0c0"/></svg><div class="t" style="left:1430px;top:870.2px;font-size:12px;color:#b8b8b8;">R</div><svg class="a" style="left:1420px;top:886px" width="14" height="12"><path d="M0 1h5l1.5 1.5H14V12H0Z" fill="#c0c0c0"/></svg><svg class="a" style="left:1420px;top:902px" width="14" height="12"><path d="M0 1h5l1.5 1.5H14V12H0Z" fill="#c0c0c0"/></svg><svg class="a" style="left:1420px;top:918px" width="14" height="12"><path d="M0 1h5l1.5 1.5H14V12H0Z" fill="#c0c0c0"/></svg><svg class="a" style="left:1414px;top:934px" width="14" height="12"><path d="M0 1h5l1.5 1.5H14V12H0Z" fill="#c0c0c0"/></svg><div class="t" style="left:1430px;top:934.2px;font-size:12px;color:#b8b8b8;">S</div><svg class="a" style="left:1414px;top:950px" width="14" height="12"><path d="M0 1h5l1.5 1.5H14V12H0Z" fill="#c0c0c0"/></svg><div class="t" style="left:1430px;top:950.2px;font-size:12px;color:#b8b8b8;">S</div><svg class="a" style="left:1414px;top:966px" width="14" height="12"><path d="M0 1h5l1.5 1.5H14V12H0Z" fill="#c0c0c0"/></svg><div class="t" style="left:1430px;top:966.2px;font-size:12px;color:#b8b8b8;">T</div><svg class="a" style="left:1414px;top:982px" width="14" height="12"><path d="M0 1h5l1.5 1.5H14V12H0Z" fill="#c0c0c0"/></svg><div class="t" style="left:1430px;top:982.2px;font-size:12px;color:#b8b8b8;">T</div><svg class="a" style="left:1414px;top:998px" width="14" height="12"><path d="M0 1h5l1.5 1.5H14V12H0Z" fill="#c0c0c0"/></svg><div class="t" style="left:1430px;top:998.2px;font-size:12px;color:#b8b8b8;">U</div><svg class="a" style="left:1414px;top:1014px" width="14" height="12"><path d="M0 1h5l1.5 1.5H14V12H0Z" fill="#c0c0c0"/></svg><div class="t" style="left:1430px;top:1014.2px;font-size:12px;color:#b8b8b8;">U</div><svg class="a" style="left:1403px;top:728px" width="5" height="8"><path d="M0 0L5 4L0 8Z" fill="#6a6a6a"/></svg><svg class="a" style="left:1403px;top:760px" width="5" height="8"><path d="M0 0L5 4L0 8Z" fill="#6a6a6a"/></svg><svg class="a" style="left:1403px;top:936px" width="5" height="8"><path d="M0 0L5 4L0 8Z" fill="#6a6a6a"/></svg><svg class="a" style="left:1402px;top:874px" width="8" height="5"><path d="M0 0L8 0L4.0 5Z" fill="#6a6a6a"/></svg><div class="a" style="left:1421px;top:759px;width:7px;height:7px;background:#3a9ad0;border-radius:1px"></div><div class="a" style="left:1421px;top:839px;width:7px;height:7px;background:#3a9ad0;border-radius:1px"></div><div class="a" style="left:1421px;top:1015px;width:7px;height:7px;background:#3a9ad0;border-radius:1px"></div><div class="a" style="left:1438px;top:678px;width:13px;height:352px;background:#2a2a2a;"></div><svg class="a" style="left:1440px;top:681px" width="8" height="6"><path d="M0 6L4 0L8 6Z" fill="#aaa"/></svg><svg class="a" style="left:1440px;top:1017px" width="8" height="6"><path d="M0 0L4 6L8 0Z" fill="#aaa"/></svg><div class="a" style="left:1440px;top:836px;width:9px;height:71px;background:#444;border-radius:4px"></div><div class="a" style="left:1451px;top:697px;width:1px;height:333px;background:#1f1f1f;"></div><div class="a" style="left:1470px;top:701px;width:13px;height:14px;background:#dde6dd;border-radius:1px"></div><div class="t" style="left:1472px;top:702.7px;font-size:11px;color:#2f8a2f;font-weight:bold;">#</div><div class="t" style="left:1486px;top:702.2px;font-size:12px;color:#bcbcbc;">ActiveMeshes</div><div class="a" style="left:1470px;top:717px;width:13px;height:14px;background:#dde6dd;border-radius:1px"></div><div class="t" style="left:1472px;top:718.7px;font-size:11px;color:#2f8a2f;font-weight:bold;">#</div><div class="t" style="left:1486px;top:718.2px;font-size:12px;color:#bcbcbc;">Aim</div><div class="a" style="left:1470px;top:733px;width:13px;height:14px;background:#dde6dd;border-radius:1px"></div><div class="t" style="left:1472px;top:734.7px;font-size:11px;color:#2f8a2f;font-weight:bold;">#</div><div class="t" style="left:1486px;top:734.2px;font-size:12px;color:#bcbcbc;">AimTarget</div><div class="a" style="left:1470px;top:749px;width:13px;height:14px;background:#dde6dd;border-radius:1px"></div><div class="t" style="left:1472px;top:750.7px;font-size:11px;color:#2f8a2f;font-weight:bold;">#</div><div class="a" style="left:1476px;top:749px;width:7px;height:7px;background:#3a9ad0;"></div><div class="t" style="left:1486px;top:750.2px;font-size:12px;color:#bcbcbc;">AITarget</div><div class="a" style="left:1470px;top:765px;width:13px;height:14px;background:#dde6dd;border-radius:1px"></div><div class="t" style="left:1472px;top:766.7px;font-size:11px;color:#2f8a2f;font-weight:bold;">#</div><div class="a" style="left:1476px;top:765px;width:7px;height:7px;background:#3a9ad0;"></div><div class="t" style="left:1486px;top:766.2px;font-size:12px;color:#bcbcbc;">AIWanderArea</div><div class="a" style="left:1470px;top:781px;width:13px;height:14px;background:#dde6dd;border-radius:1px"></div><div class="t" style="left:1472px;top:782.7px;font-size:11px;color:#2f8a2f;font-weight:bold;">#</div><div class="t" style="left:1486px;top:782.2px;font-size:12px;color:#bcbcbc;">Aligner</div><div class="a" style="left:1470px;top:797px;width:13px;height:14px;background:#dde6dd;border-radius:1px"></div><div class="t" style="left:1472px;top:798.7px;font-size:11px;color:#2f8a2f;font-weight:bold;">#</div><div class="t" style="left:1486px;top:798.2px;font-size:12px;color:#bcbcbc;">AnimatorEventS</div><div class="a" style="left:1470px;top:813px;width:13px;height:14px;background:#dde6dd;border-radius:1px"></div><div class="t" style="left:1472px;top:814.7px;font-size:11px;color:#2f8a2f;font-weight:bold;">#</div><div class="t" style="left:1486px;top:814.2px;font-size:12px;color:#bcbcbc;">BlendShape</div><svg class="a" style="left:1468px;top:829px" width="15" height="15"><path d="M3 12L12 3" stroke="#e040a0" stroke-width="4"/><circle cx="3.5" cy="11.5" r="3" fill="#40a8d8"/></svg><div class="t" style="left:1486px;top:830.2px;font-size:12px;color:#bcbcbc;">BlendShapePres</div><div class="a" style="left:1470px;top:845px;width:13px;height:14px;background:#dde6dd;border-radius:1px"></div><div class="t" style="left:1472px;top:846.7px;font-size:11px;color:#2f8a2f;font-weight:bold;">#</div><div class="t" style="left:1486px;top:846.2px;font-size:12px;color:#bcbcbc;">BlinkEyes</div><svg class="a" style="left:1468px;top:861px" width="15" height="15"><path d="M3 12L12 3" stroke="#e8d8a0" stroke-width="3.5"/><circle cx="2.5" cy="10.5" r="2" fill="#e8d8a0"/><circle cx="4.5" cy="12.5" r="2" fill="#e8d8a0"/><circle cx="10.5" cy="2.5" r="2" fill="#e8d8a0"/><circle cx="12.5" cy="4.5" r="2" fill="#e8d8a0"/></svg><div class="t" style="left:1486px;top:862.2px;font-size:12px;color:#bcbcbc;">BonePreset</div><div class="a" style="left:1470px;top:877px;width:13px;height:14px;background:#dde6dd;border-radius:1px"></div><div class="t" style="left:1472px;top:878.7px;font-size:11px;color:#2f8a2f;font-weight:bold;">#</div><div class="t" style="left:1486px;top:878.2px;font-size:12px;color:#bcbcbc;">BoneScaler</div><div class="a" style="left:1470px;top:893px;width:13px;height:14px;background:#dde6dd;border-radius:1px"></div><div class="t" style="left:1472px;top:894.7px;font-size:11px;color:#2f8a2f;font-weight:bold;">#</div><div class="t" style="left:1486px;top:894.2px;font-size:12px;color:#bcbcbc;">Comment</div><div class="a" style="left:1470px;top:909px;width:13px;height:14px;background:#dde6dd;border-radius:1px"></div><div class="t" style="left:1472px;top:910.7px;font-size:11px;color:#2f8a2f;font-weight:bold;">#</div><div class="t" style="left:1486px;top:910.2px;font-size:12px;color:#bcbcbc;">DeltaTransform</div><div class="a" style="left:1470px;top:925px;width:13px;height:14px;background:#dde6dd;border-radius:1px"></div><div class="t" style="left:1472px;top:926.7px;font-size:11px;color:#2f8a2f;font-weight:bold;">#</div><div class="t" style="left:1486px;top:926.2px;font-size:12px;color:#bcbcbc;">Dismember</div><div class="a" style="left:1470px;top:941px;width:13px;height:14px;background:#dde6dd;border-radius:1px"></div><div class="t" style="left:1472px;top:942.7px;font-size:11px;color:#2f8a2f;font-weight:bold;">#</div><div class="t" style="left:1486px;top:942.2px;font-size:12px;color:#bcbcbc;">FireBreath</div><div class="a" style="left:1470px;top:957px;width:13px;height:14px;background:#dde6dd;border-radius:1px"></div><div class="t" style="left:1472px;top:958.7px;font-size:11px;color:#2f8a2f;font-weight:bold;">#</div><div class="t" style="left:1486px;top:958.2px;font-size:12px;color:#bcbcbc;">FollowTarget</div><div class="a" style="left:1470px;top:973px;width:13px;height:14px;background:#dde6dd;border-radius:1px"></div><div class="t" style="left:1472px;top:974.7px;font-size:11px;color:#2f8a2f;font-weight:bold;">#</div><div class="t" style="left:1486px;top:974.2px;font-size:12px;color:#bcbcbc;">ForwardDirToV3</div><div class="a" style="left:1470px;top:989px;width:13px;height:14px;background:#dde6dd;border-radius:1px"></div><div class="t" style="left:1472px;top:990.7px;font-size:11px;color:#2f8a2f;font-weight:bold;">#</div><div class="t" style="left:1486px;top:990.2px;font-size:12px;color:#bcbcbc;">GizmoVisualizer</div><div class="a" style="left:1452px;top:697px;width:129px;height:320px;overflow:hidden"></div><div class="a" style="left:1581px;top:697px;width:12px;height:320px;background:#2d2d2d;"></div><svg class="a" style="left:1583px;top:704px" width="8" height="6"><path d="M0 6L4 0L8 6Z" fill="#aaa"/></svg><svg class="a" style="left:1583px;top:996px" width="8" height="6"><path d="M0 0L4 6L8 0Z" fill="#aaa"/></svg><div class="a" style="left:1583px;top:714px;width:8px;height:117px;background:#444;border-radius:4px"></div><div class="a" style="left:1452px;top:1010px;width:141px;height:20px;background:#2d2d2d;"></div><div class="a" style="left:1522px;top:1017px;width:55px;height:1px;background:#555;"></div><div class="a" style="left:1521px;top:1012px;width:10px;height:10px;border-radius:50%;background:#6a6a6a"></div><div class="a" style="left:0px;top:741px;width:1339px;height:19px;background:#1e1e1e;"></div><div class="a" style="left:0px;top:741px;width:112px;height:19px;background:#2d2d2d;"></div><div class="t" style="left:22px;top:746.2px;font-size:12px;color:#c5c5c5;">Console Pro</div><div class="a" style="left:113px;top:741px;width:92px;height:19px;background:#1e1e1e;"></div><div class="t" style="left:137px;top:746.2px;font-size:12px;color:#b1b1b1;">Animator</div><div class="a" style="left:206px;top:741px;width:90px;height:19px;background:#1e1e1e;"></div><div class="t" style="left:231px;top:746.2px;font-size:12px;color:#b1b1b1;">Timeline</div><svg class="a" style="left:5px;top:745px" width="11" height="11"><rect x="0.5" y="0.5" width="10" height="10" rx="3" fill="#d0d0d0"/><path d="M1 4h9M1 7h9" stroke="#222" stroke-width="1.2"/></svg><svg class="a" style="left:122px;top:745px" width="12" height="11"><path d="M1 1l5 4M1 10l5-5h6M9 2l3 3-3 3" stroke="#bbb" stroke-width="1.3" fill="none"/></svg><svg class="a" style="left:215px;top:745px" width="12" height="11"><rect x="0.6" y="0.6" width="10.8" height="9.8" fill="none" stroke="#bbb" stroke-width="1.2"/><path d="M3 1v9M9 1v9" stroke="#bbb" stroke-width="1"/></svg><div class="a" style="left:1325px;top:745px;width:2px;height:2px;background:#b4b4b4;"></div><div class="a" style="left:1325px;top:749px;width:2px;height:2px;background:#b4b4b4;"></div><div class="a" style="left:1325px;top:753px;width:2px;height:2px;background:#b4b4b4;"></div><div class="a" style="left:0px;top:760px;width:1339px;height:20px;background:#2d2d2d;"></div><div class="a" style="left:0px;top:761px;width:47px;height:18px;background:#2e2e2e;"></div><div class="t" style="left:8px;top:764.2px;font-size:12px;color:#b8b8b8;">Clear</div><div class="a" style="left:50px;top:761px;width:58px;height:18px;background:#2e2e2e;"></div><div class="t" style="left:55px;top:764.2px;font-size:12px;color:#b8b8b8;">Collapse</div><div class="a" style="left:109px;top:761px;width:84px;height:18px;background:#3a3a3a;"></div><div class="t" style="left:112px;top:764.2px;font-size:12px;color:#b8b8b8;">Clear on Play</div><div class="a" style="left:195px;top:761px;width:76px;height:18px;background:#2e2e2e;"></div><div class="t" style="left:200px;top:764.2px;font-size:12px;color:#b8b8b8;">Error Pause</div><div class="a" style="left:272px;top:761px;width:20px;height:18px;background:#2e2e2e;"></div><div class="t" style="left:277px;top:764.2px;font-size:12px;color:#b8b8b8;">...</div><div class="a" style="left:303px;top:762px;width:199px;height:16px;background:#1f1f1f;border-radius:3px;border:1px solid #171717"></div><svg class="a" style="left:308px;top:765px" width="12" height="11"><circle cx="4" cy="4" r="3" stroke="#9a9a9a" fill="none" stroke-width="1.2"/><path d="M6 6l4 4" stroke="#9a9a9a" stroke-width="1.4"/></svg><div class="a" style="left:1248px;top:761px;width:82px;height:18px;background:#2e2e2e;"></div><svg class="a" style="left:1251px;top:763px" width="15" height="14"><path d="M1 1h13v9H9l-2 3-2-3H1z" fill="#e8e8e8" stroke="#222" stroke-width="0.8"/><path d="M3 4h9M3 7h9" stroke="#222" stroke-width="1.2"/></svg><div class="t" style="left:1274px;top:764.2px;font-size:12px;color:#8a8a8a;">30</div><svg class="a" style="left:1295px;top:762px" width="16" height="15"><path d="M8 1L15 14H1Z" fill="#e8c820" stroke="#222" stroke-width="0.6"/><path d="M8 5v5M8 11.5v1.5" stroke="#222" stroke-width="1.6"/></svg><div class="a" style="left:1316px;top:762px;width:14px;height:15px;background:#d01818;border-radius:2px"></div><div class="t" style="left:1320px;top:765.1px;font-size:8px;color:#fff;">x</div><div class="a" style="left:0px;top:780px;width:1326px;height:20px;background:#2b2b2b;"></div><div class="a" style="left:24px;top:780px;width:1px;height:20px;background:#1f1f1f;"></div><div class="a" style="left:797px;top:780px;width:1px;height:20px;background:#1f1f1f;"></div><div class="a" style="left:864px;top:780px;width:1px;height:20px;background:#1f1f1f;"></div><div class="a" style="left:947px;top:780px;width:1px;height:20px;background:#1f1f1f;"></div><div class="a" style="left:0px;top:799px;width:1326px;height:1px;background:#222;"></div><div class="a" style="left:1326px;top:780px;width:13px;height:20px;background:#2d2d2d;"></div><div class="t" style="left:30px;top:785.2px;font-size:12px;color:#b1b1b1;">Log</div><div class="t" style="left:803px;top:785.2px;font-size:12px;color:#b1b1b1;">Object</div><div class="t" style="left:870px;top:785.2px;font-size:12px;color:#b1b1b1;">Frame</div><div class="t" style="left:953px;top:785.2px;font-size:12px;color:#b1b1b1;">Time</div><div class="a" style="left:0px;top:800px;width:1326px;height:19px;background:#2d2d2d;"></div><svg class="a" style="left:6px;top:800px" width="14" height="14"><path d="M0.5 1.5h13v8.5H9l-2 3-2-3H0.5z" fill="#e6e6e6" stroke="#111" stroke-width="1"/><path d="M2.5 4.3h9M2.5 7.2h9" stroke="#222" stroke-width="1.3"/></svg><div class="t" style="left:29px;top:801.2px;font-size:12px;color:#b0b0b0;letter-spacing:0.5px"><b style="color:#c6c6c6;letter-spacing:0.8px">Wolf Lite AI:</b> is waiting 3.59 seconds</div><div class="t" style="left:869px;top:801.2px;font-size:12px;color:#a5a5a5;">1820</div><div class="t" style="left:953px;top:801.2px;font-size:12px;color:#a5a5a5;">22:16:07.715</div><div class="a" style="left:0px;top:818px;width:1326px;height:19px;background:#313131;"></div><svg class="a" style="left:6px;top:819px" width="14" height="14"><path d="M0.5 1.5h13v8.5H9l-2 3-2-3H0.5z" fill="#e6e6e6" stroke="#111" stroke-width="1"/><path d="M2.5 4.3h9M2.5 7.2h9" stroke="#222" stroke-width="1.3"/></svg><div class="t" style="left:29px;top:820.2px;font-size:12px;color:#b0b0b0;letter-spacing:0.5px">target = Wander Area (UnityEngine.Transform)</div><div class="t" style="left:869px;top:820.2px;font-size:12px;color:#a5a5a5;">2153</div><div class="t" style="left:953px;top:820.2px;font-size:12px;color:#a5a5a5;">22:16:11.317</div><div class="a" style="left:0px;top:837px;width:1326px;height:19px;background:#2d2d2d;"></div><svg class="a" style="left:6px;top:837px" width="14" height="14"><path d="M0.5 1.5h13v8.5H9l-2 3-2-3H0.5z" fill="#e6e6e6" stroke="#111" stroke-width="1"/><path d="M2.5 4.3h9M2.5 7.2h9" stroke="#222" stroke-width="1.3"/></svg><div class="t" style="left:29px;top:838.2px;font-size:12px;color:#b0b0b0;letter-spacing:0.5px">NextDestination = (-6.2, 0.0, -9.8)</div><div class="t" style="left:869px;top:838.2px;font-size:12px;color:#a5a5a5;">2153</div><div class="t" style="left:953px;top:838.2px;font-size:12px;color:#a5a5a5;">22:16:11.318</div><div class="a" style="left:0px;top:856px;width:1326px;height:19px;background:#313131;"></div><svg class="a" style="left:6px;top:855px" width="14" height="14"><path d="M0.5 1.5h13v8.5H9l-2 3-2-3H0.5z" fill="#e6e6e6" stroke="#111" stroke-width="1"/><path d="M2.5 4.3h9M2.5 7.2h9" stroke="#222" stroke-width="1.3"/></svg><div class="t" style="left:29px;top:856.2px;font-size:12px;color:#b0b0b0;letter-spacing:0.5px"><b style="color:#c6c6c6;letter-spacing:0.8px">Wolf Lite AI:</b> is travelling to: <b style="color:#c6c6c6;letter-spacing:0.8px">Wander Area</b> - (-6.2, 0.0, -9.8)</div><div class="t" style="left:869px;top:856.2px;font-size:12px;color:#a5a5a5;">2153</div><div class="t" style="left:953px;top:856.2px;font-size:12px;color:#a5a5a5;">22:16:11.318</div><div class="a" style="left:0px;top:874px;width:1326px;height:19px;background:#2d2d2d;"></div><svg class="a" style="left:6px;top:874px" width="14" height="14"><path d="M0.5 1.5h13v8.5H9l-2 3-2-3H0.5z" fill="#e6e6e6" stroke="#111" stroke-width="1"/><path d="M2.5 4.3h9M2.5 7.2h9" stroke="#222" stroke-width="1.3"/></svg><div class="t" style="left:29px;top:875.2px;font-size:12px;color:#b0b0b0;letter-spacing:0.5px"><b style="color:#c6c6c6;letter-spacing:0.8px">Wolf Lite AI:</b> has arrived to: <b style="color:#c6c6c6;letter-spacing:0.8px">Wander Area</b> - (-6.2, 0.0, -9.8)</div><div class="t" style="left:869px;top:875.2px;font-size:12px;color:#a5a5a5;">2170</div><div class="t" style="left:953px;top:875.2px;font-size:12px;color:#a5a5a5;">22:16:11.497</div><div class="a" style="left:0px;top:891px;width:1326px;height:20px;background:#3d5c93;"></div><svg class="a" style="left:6px;top:893px" width="14" height="14"><path d="M0.5 1.5h13v8.5H9l-2 3-2-3H0.5z" fill="#e6e6e6" stroke="#111" stroke-width="1"/><path d="M2.5 4.3h9M2.5 7.2h9" stroke="#222" stroke-width="1.3"/></svg><div class="t" style="left:29px;top:893.8px;font-size:12.8px;color:#e4e4e4;letter-spacing:0.5px"><b style="color:#e8e8e8;letter-spacing:0.8px">Wolf Lite AI:</b> is waiting 4.33 seconds</div><div class="t" style="left:869px;top:893.8px;font-size:12.8px;color:#d6d6d6;">2170</div><div class="t" style="left:953px;top:893.8px;font-size:12.8px;color:#d6d6d6;">22:16:11.497</div><div class="a" style="left:1326px;top:800px;width:13px;height:111px;background:#2d2d2d;"></div><svg class="a" style="left:1328px;top:804px" width="8" height="6"><path d="M0 6L4 0L8 6Z" fill="#aaa"/></svg><svg class="a" style="left:1328px;top:899px" width="8" height="6"><path d="M0 0L4 6L8 0Z" fill="#aaa"/></svg><div class="a" style="left:1328px;top:865px;width:9px;height:28px;background:#444;border-radius:4px"></div><div class="a" style="left:0px;top:911px;width:1326px;height:20px;background:#2a2a2a;"></div><div class="t" style="left:5px;top:916.2px;font-size:12px;color:#bdbdbd;letter-spacing:0.5px"><b style="color:#cfcfcf;letter-spacing:0.8px">Wolf Lite AI:</b> is waiting 4.33 seconds</div><div class="a" style="left:0px;top:931px;width:1326px;height:1px;background:#1e1e1e;"></div><div class="a" style="left:0px;top:932px;width:1326px;height:95px;background:#2f2f2f;"></div><div class="t" style="left:5px;top:940.2px;font-size:12px;color:#909090;">-</div><div class="t" style="left:18px;top:939.2px;font-size:12px;color:#a8a8a8;letter-spacing:0.5px"><b style="color:#cfcfcf;letter-spacing:0.8px">MAnimalAIControl.Debuging()</b> at /Malbers Animations/Common/Scripts/Animal Controller/MAnimalAIControl.cs:819</div><div class="a" style="left:15px;top:972px;width:1303px;height:16px;background:#3d5c93;"></div><div class="t" style="left:15px;top:959.2px;font-size:12px;color:#969696;">817:</div><div class="t" style="left:53px;top:959.2px;font-size:12px;color:#969696;">}</div><div class="t" style="left:15px;top:974.2px;font-size:12px;color:#cecece;">819:</div><div class="t" style="left:53px;top:974.2px;font-size:12px;color:#dcdcdc;letter-spacing:0.5px">protected virtual void Debuging(string Log) { if (debug) Debug.Log($&quot;&lt;B&gt;{animal.name}:&lt;/B&gt; &quot; + Log); }</div><div class="t" style="left:15px;top:989.2px;font-size:12px;color:#969696;">821:</div><div class="t" style="left:53px;top:989.2px;font-size:12px;color:#a0a0a0;letter-spacing:0.5px">protected virtual void Debuging(string Log, GameObject obj) { if (debug) Debug.Log($&quot;<b style="color:#c8c8c8;letter-spacing:0.8px">{animal.name}:</b> &quot;+ Log, obj); }</div><div class="t" style="left:5px;top:1016.2px;font-size:12px;color:#909090;">-</div><div class="t" style="left:18px;top:1015.2px;font-size:12px;color:#a8a8a8;letter-spacing:0.5px"><b style="color:#cfcfcf;letter-spacing:0.8px">MalbersAnimations.Controller.&lt;C_WaitToNextTarget&gt;d__141.MoveNext()</b> at /Malbers Animations/Common/Scripts/Animal Controller/MAnimalAIControl.cs:766</div><div class="a" style="left:1326px;top:911px;width:13px;height:116px;background:#2f2f2f;"></div><svg class="a" style="left:1328px;top:915px" width="8" height="6"><path d="M0 6L4 0L8 6Z" fill="#aaa"/></svg><svg class="a" style="left:1328px;top:1017px" width="8" height="6"><path d="M0 0L4 6L8 0Z" fill="#aaa"/></svg><div class="a" style="left:1328px;top:927px;width:9px;height:29px;background:#444;border-radius:4px"></div><div class="a" style="left:0px;top:1027px;width:1920px;height:22px;background:#191919;"></div><svg class="a" style="left:3px;top:1032px" width="14" height="14"><circle cx="7" cy="6.5" r="6" fill="#c8c8c8"/><path d="M3 11L2 14L6 12Z" fill="#c8c8c8"/><path d="M7 3v4.5M7 9v1.5" stroke="#1b1b1b" stroke-width="1.8"/></svg><div class="t" style="left:20px;top:1033.2px;font-size:12px;color:#bdbdbd;letter-spacing:0.5px"><b style="color:#cfcfcf;letter-spacing:0.8px">Wolf Lite AI:</b> is waiting 4.33 seconds</div><div class="t" style="left:1737px;top:1034.2px;font-size:12px;color:#a9a9a9;">Auto Generate Lighting On</div><div class="a" style="left:0px;top:1049px;width:1920px;height:31px;background:#1e2124;"></div><svg class="a" style="left:0;top:1048px" width="1920" height="32" viewBox="0 1048 1920 32"><path d="M10 1057h7.5v7.5H10zM19 1056h8v8.5h-8zM10 1066h7.5v7.5H10zM19 1066h8v8h-8z" fill="#f2f2f2"/><rect x="49" y="1057" width="16" height="15" rx="1" fill="#2f8fd8"/><rect x="52" y="1057" width="9" height="5" fill="#e8f0f8"/><rect x="51" y="1066" width="12" height="6" fill="#e8f0f8"/><rect x="80" y="1049" width="24" height="31" fill="#3a5432"/><rect x="80" y="1077" width="28" height="3" fill="#69c23f"/><path d="M85 1058h5l2 2h9v12H85z" fill="#f2c84b"/><rect x="88" y="1066" width="8" height="5" fill="#3b8fd8"/><circle cx="132" cy="1065" r="8" fill="#e04a3a"/><path d="M132 1065L125 1069A8 8 0 0 0 136 1072.5Z" fill="#3aa853"/><path d="M132 1065L136 1072.5A8 8 0 0 0 140 1065Z" fill="#f4c20d"/><circle cx="132" cy="1065" r="3.2" fill="#4a8af4" stroke="#fff" stroke-width="1.2"/><rect x="118" y="1077" width="27" height="3" fill="#7fb0d8"/><circle cx="168" cy="1064" r="8" fill="#1f6ea8"/><circle cx="171" cy="1062" r="3" fill="none" stroke="#fff" stroke-width="1.5"/><path d="M161 1066l8 3" stroke="#fff" stroke-width="2"/><rect x="197" y="1056" width="16" height="16" fill="#0a1a2a" stroke="#31c5f0" stroke-width="1"/><text x="205" y="1068.5" font-family="Liberation Sans" font-size="10" fill="#31c5f0" text-anchor="middle">Ps</text><rect x="234" y="1056" width="16" height="16" fill="#1a0a2a" stroke="#c08cf0" stroke-width="1"/><text x="242" y="1068.5" font-family="Liberation Sans" font-size="10" fill="#c08cf0" text-anchor="middle">Ae</text><rect x="271" y="1056" width="16" height="16" fill="#0a0a3a" stroke="#9a9aff" stroke-width="1"/><text x="279" y="1068.5" font-family="Liberation Sans" font-size="10" fill="#9a9aff" text-anchor="middle">Pr</text><rect x="309" y="1055" width="15" height="18" fill="#111" stroke="#ddd" stroke-width="0.8"/><text x="316.5" y="1065" font-family="Liberation Sans" font-size="6" font-weight="bold" fill="#eee" text-anchor="middle">EPIC</text><path d="M346 1066q0-9 9-9q7 0 6 5q-1 3-4 2q-3 0-2 4q0 4-4 4q-5 0-5-6z" fill="#9ac8e8"/><circle cx="350" cy="1063" r="1.5" fill="#e04040"/><circle cx="354" cy="1060" r="1.5" fill="#40a040"/><path d="M358 1072l4-14" stroke="#e8a040" stroke-width="2"/><rect x="384" y="1056" width="12" height="17" fill="#6a7a8a"/><rect x="386" y="1058" width="8" height="3" fill="#c8d8e8"/><path d="M386 1064h2M390 1064h2M386 1067h2M390 1067h2M386 1070h2M390 1070h2" stroke="#dde" stroke-width="1.5"/><circle cx="427" cy="1064" r="7" fill="#d02030"/><text x="427" y="1068" font-family="Liberation Sans" font-size="10" font-weight="bold" fill="#fff" text-anchor="middle">S</text><rect x="456" y="1056" width="13" height="16" fill="#f8f0e0"/><circle cx="461" cy="1062" r="3.5" fill="none" stroke="#e87020" stroke-width="1.8"/><path d="M459 1065l-3 5" stroke="#e87020" stroke-width="2"/><circle cx="501" cy="1064" r="8" fill="#e8402a"/><circle cx="501" cy="1064" r="5" fill="#2a9ad8"/><circle cx="502" cy="1063" r="3" fill="#1e2124"/><path d="M494 1060q3-5 9-5" stroke="#f0c020" stroke-width="2.5" fill="none"/><path d="M508 1066q-2 6-9 6" stroke="#40c040" stroke-width="2.5" fill="none"/><circle cx="537" cy="1064" r="8" fill="#3a3a3a" stroke="#888" stroke-width="1"/><circle cx="537" cy="1064" r="3" fill="none" stroke="#bbb" stroke-width="1.3"/><rect x="523" y="1077" width="29" height="3" fill="#7fb0d8"/><rect x="567" y="1056" width="16" height="16" fill="#151515"/><path d="M569 1058l6 6 8-2-8 2 2 8-2-8z" stroke="#bbb" stroke-width="1.8" fill="none"/><path d="M604 1056l15 17M619 1056l-15 17" stroke="#f4f4f4" stroke-width="2.4"/><path d="M615 1056l4-2" stroke="#f08020" stroke-width="2.4"/><rect x="640" y="1056" width="16" height="16" rx="2" fill="#2a6ad0"/><path d="M648 1058v9M644 1063l4 4 4-4M644 1070h8" stroke="#fff" stroke-width="1.8" fill="none"/><rect x="678" y="1056" width="16" height="16" rx="2" fill="#f8a040" stroke="#ddd" stroke-width="1"/><path d="M683 1060l7 4-7 4z" fill="#fff"/><circle cx="725" cy="1064" r="5" fill="#f0f0f0" stroke="#e87d0d" stroke-width="2.5"/><path d="M714 1062h7M716 1067l5-2" stroke="#e87d0d" stroke-width="2"/><circle cx="725" cy="1064" r="2" fill="#2a5a9a"/><rect x="752" y="1056" width="16" height="16" fill="#cde8e0"/><text x="760" y="1069" font-family="Liberation Sans" font-size="12" font-weight="bold" fill="#1a9a8a" text-anchor="middle">3</text><rect x="863" y="1056" width="16" height="16" fill="#cde8e0"/><text x="871" y="1069" font-family="Liberation Sans" font-size="12" font-weight="bold" fill="#1a9a8a" text-anchor="middle">3</text><rect x="789" y="1056" width="16" height="16" fill="#f8e030"/><path d="M797 1072l8-8v8z" fill="#5a5020"/><path d="M834 1055l7 16h-14z" fill="#f08c1c"/><path d="M829 1066h10M831 1061h6" stroke="#fff" stroke-width="1.5"/><rect x="826" y="1071" width="16" height="2" fill="#f08c1c"/><circle cx="908" cy="1064" r="8" fill="#7a5ad8"/><path d="M902 1066q6-8 12 0M904 1069q4-6 8 0" stroke="#e0d8f8" stroke-width="1.4" fill="none"/><rect x="893" y="1077" width="29" height="3" fill="#7fb0d8"/><rect x="937" y="1057" width="16" height="13" rx="4" fill="#6a7ae8"/><circle cx="942" cy="1063.5" r="1.5" fill="#1e2124"/><circle cx="948" cy="1063.5" r="1.5" fill="#1e2124"/><rect x="930" y="1077" width="28" height="3" fill="#7fb0d8"/><path d="M974 1060h16l2 10-4 1-3-4h-6l-3 4-4-1z" fill="#e8e8e8"/><circle cx="978" cy="1064" r="1.6" fill="#d03030"/><circle cx="986" cy="1064" r="1.6" fill="#3070d0"/><rect x="1010" y="1056" width="16" height="16" rx="1" fill="#1f7fe0"/><rect x="1013" y="1056" width="9" height="5" fill="#fff"/><rect x="1012" y="1065" width="12" height="7" fill="#e84040"/><rect x="1005" y="1077" width="28" height="3" fill="#7fb0d8"/><rect x="1038" y="1049" width="36" height="31" fill="#3c3c3c"/><rect x="1047" y="1056" width="18" height="17" fill="#000"/><path d="M1056 1059l5 3v5l-5 3-5-3v-5z" fill="none" stroke="#fff" stroke-width="1.4"/><rect x="1038" y="1077" width="36" height="3" fill="#8fc0e8"/><path d="M1086 1060l4 4-4 4M1101 1056v17l-11-8 11-9" stroke="#9a5ad8" stroke-width="2.6" fill="none"/><rect x="1077" y="1077" width="30" height="3" fill="#7fb0d8"/><path d="M1608 1068l5-5 5 5" stroke="#e8e8e8" stroke-width="1.3" fill="none"/><rect x="1631" y="1060" width="14" height="10" rx="3" fill="#e8e8e8"/><circle cx="1644" cy="1058" r="2.5" fill="#e83030"/><circle cx="1662" cy="1064" r="7" fill="#e84040"/><circle cx="1662" cy="1064" r="4.5" fill="#30a0e8"/><circle cx="1662" cy="1064" r="2.5" fill="#1e2124"/><path d="M1656 1060q4-4 8-3" stroke="#40c040" stroke-width="2" fill="none"/><path d="M1686 1057l7 4v7l-7 4-7-4v-7z" fill="none" stroke="#e8e8e8" stroke-width="1.4"/><path d="M1686 1065v7M1686 1065l7-4M1686 1065l-7-4" stroke="#e8e8e8" stroke-width="1.1"/><path d="M1703 1062h3l4-4v12l-4-4h-3z" fill="none" stroke="#e8e8e8" stroke-width="1.2"/><path d="M1713 1061q2 3 0 6M1716 1059q3 5 0 10" stroke="#e8e8e8" stroke-width="1.1" fill="none"/><path d="M1728 1071q0-9 9-9M1731 1071q0-6 6-6M1734 1071q0-3 3-3" stroke="#e8e8e8" stroke-width="1.3" fill="none"/><rect x="1751" y="1061" width="14" height="8" fill="none" stroke="#e8e8e8" stroke-width="1.3"/><path d="M1753 1058v4M1757 1058v3" stroke="#e8e8e8" stroke-width="1.3"/><text x="1776" y="1069" font-family="Liberation Sans" font-size="12" fill="#f0f0f0">ENG</text><text x="1812" y="1069" font-family="Liberation Sans" font-size="12" fill="#f0f0f0">10:16 PM</text><path d="M1880 1057h15v11h-6l-3 4v-4h-6z" fill="#f0f0f0"/><path d="M1883 1060h9M1883 1063h9M1883 1066h6" stroke="#1e2124" stroke-width="1.1"/><rect x="1914" y="1049" width="1" height="31" fill="#5a5a5a"/></svg>
</body></html>
